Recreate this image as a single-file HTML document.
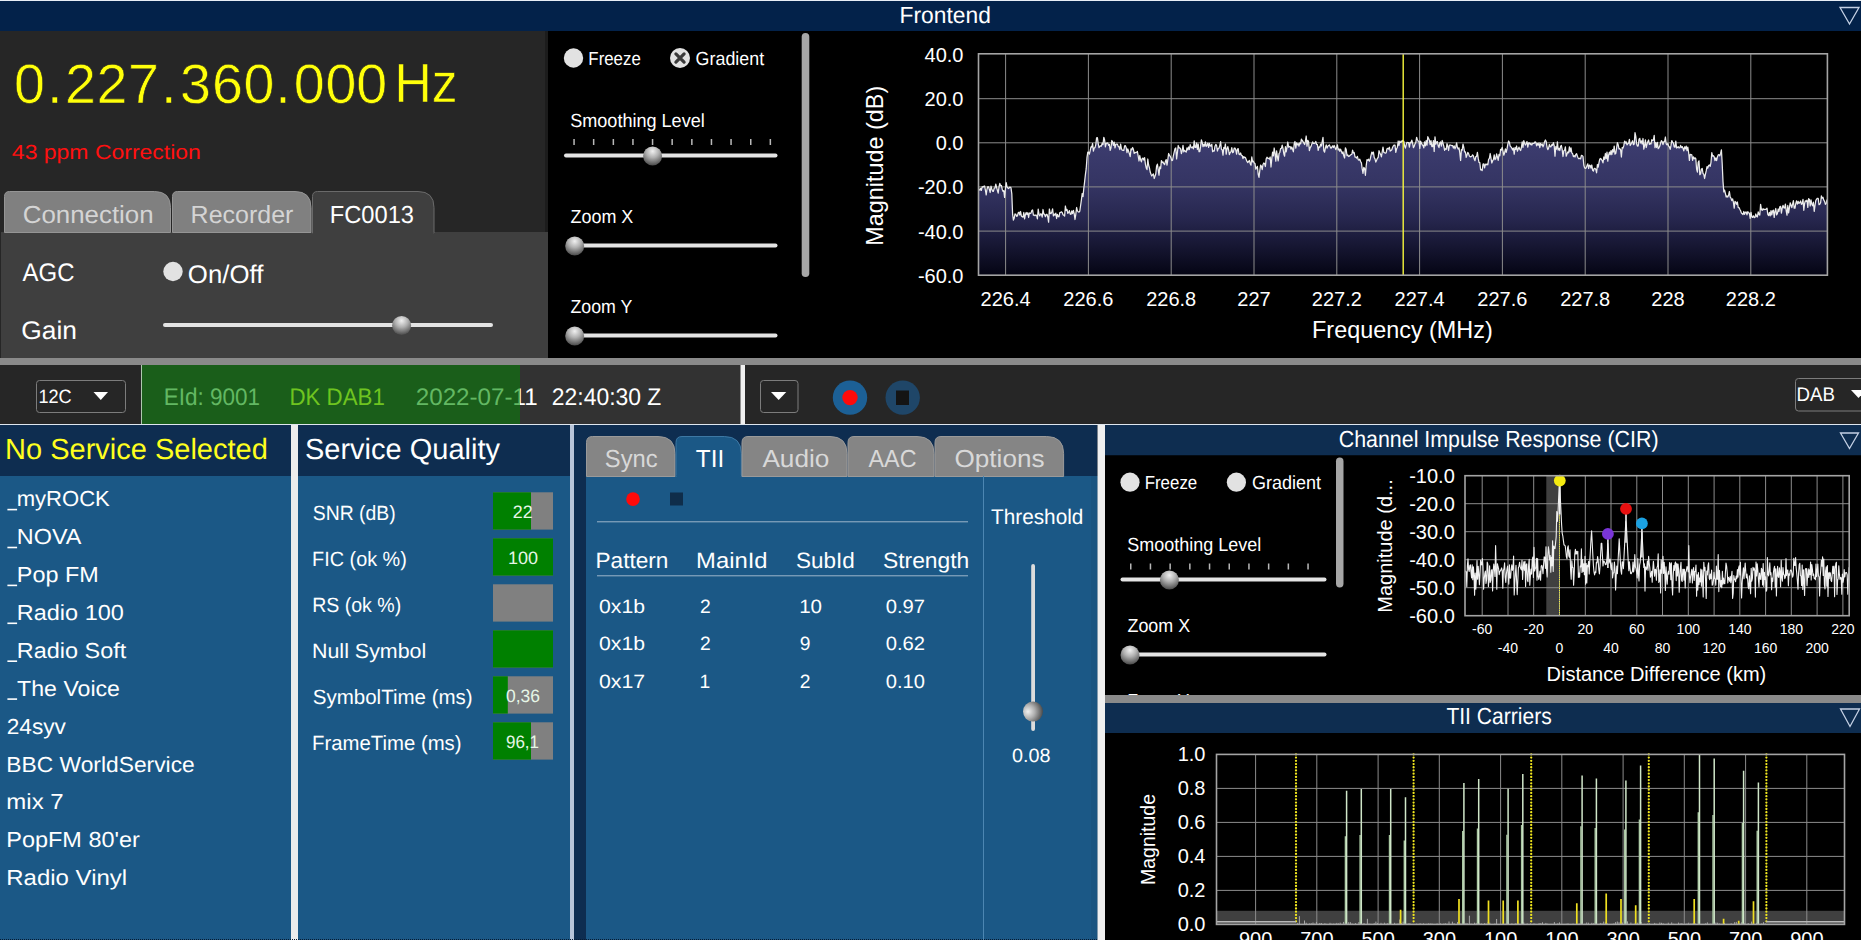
<!DOCTYPE html>
<html><head><meta charset="utf-8"><title>DAB Receiver</title>
<style>
html,body{margin:0;padding:0;background:#000;overflow:hidden;}
body{width:1861px;height:940px;font-family:"Liberation Sans", sans-serif;}
svg{display:block;position:absolute;left:0;top:0;}
svg text{font-family:"Liberation Sans", sans-serif;white-space:pre;}
svg text.u{text-rendering:geometricPrecision;}
</style></head><body>
<svg width="1861" height="940" viewBox="0 0 1861 940">
<defs>
<radialGradient id="thumb" cx="50%" cy="25%" r="75%"><stop offset="0" stop-color="#f0f0f0"/><stop offset="0.45" stop-color="#b0b0b0"/><stop offset="1" stop-color="#4a4a4a"/></radialGradient>
<radialGradient id="thumbv" cx="25%" cy="50%" r="75%"><stop offset="0" stop-color="#f0f0f0"/><stop offset="0.45" stop-color="#b0b0b0"/><stop offset="1" stop-color="#4a4a4a"/></radialGradient>
<linearGradient id="specfill" x1="0" y1="0" x2="0" y2="1"><stop offset="0" stop-color="#3e3e72"/><stop offset="0.38" stop-color="#343462"/><stop offset="0.6" stop-color="#27274f"/><stop offset="0.8" stop-color="#161632"/><stop offset="1" stop-color="#050514"/></linearGradient>
<clipPath id="clipG"><rect x="141" y="365" width="379" height="59"/></clipPath>
<clipPath id="clipN"><rect x="520" y="365" width="221" height="59"/></clipPath>
<clipPath id="clipSpec"><rect x="979" y="54" width="848" height="221"/></clipPath>
<clipPath id="clipCir"><rect x="1465" y="476" width="384" height="140"/></clipPath>
<clipPath id="clipTii"><rect x="1217" y="755" width="627" height="170"/></clipPath>
<clipPath id="clipCirCtl"><rect x="1105" y="456" width="245" height="239"/></clipPath>
</defs>
<rect x="0" y="0" width="1861" height="940" fill="#000"/>
<rect x="0" y="0" width="1861" height="1" fill="#e8eef6"/>
<rect x="0" y="1" width="1861" height="30" fill="#03224a"/>
<text class="u" x="899.58" y="22.9" font-size="23.3" fill="#fff" text-anchor="start" textLength="91.25" lengthAdjust="spacingAndGlyphs">Frontend</text>
<path d="M1840,7.5 L1859,7.5 L1849.5,24 Z" fill="none" stroke="#c4d0e4" stroke-width="1.3"/>
<rect x="0" y="31" width="548" height="327" fill="#262626"/>
<rect x="545" y="31" width="3" height="201" fill="#1c1c1c"/>
<text class="u" x="14.0 47.0 65.0 96.5 128.0 161.0 180.0 212.0 243.6 275.2 293.7 325.4 356.2" y="102.7" font-size="55.6" fill="#ffff0a" stroke="#262626" stroke-width="0.6" paint-order="fill stroke">0.227.360.000</text>
<text class="u" x="394.46" y="101.6" font-size="55.3" fill="#ffff0a" text-anchor="start" textLength="63.17" lengthAdjust="spacingAndGlyphs" stroke="#262626" stroke-width="0.6" paint-order="fill stroke">Hz</text>
<text class="u" x="11.88" y="158.9" font-size="20.4" fill="#ff1010" text-anchor="start" textLength="188.98" lengthAdjust="spacingAndGlyphs">43 ppm Correction</text>
<rect x="1" y="232" width="547" height="126" fill="#3f3f3f"/>
<path d="M4.5,232.5 L4.5,196.5 Q4.5,191.5 9.5,191.5 L154.5,191.5 Q170.5,191.5 170.5,207.5 L170.5,232.5 Z" fill="#808080" stroke="#959595" stroke-width="1"/>
<path d="M172.5,232.5 L172.5,196.5 Q172.5,191.5 177.5,191.5 L295,191.5 Q311,191.5 311,207.5 L311,232.5 Z" fill="#808080" stroke="#959595" stroke-width="1"/>
<path d="M312.5,233 L312.5,196.5 Q312.5,191.5 317.5,191.5 L418,191.5 Q434,191.5 434,207.5 L434,233 Z" fill="#3f3f3f" stroke="#6a6a6a" stroke-width="1"/>
<rect x="313" y="232" width="120.5" height="2" fill="#3f3f3f"/>
<text class="u" x="22.71" y="222.5" font-size="24.7" fill="#d4d4d4" text-anchor="start" textLength="130.96" lengthAdjust="spacingAndGlyphs">Connection</text>
<text class="u" x="190.60" y="222.5" font-size="24.7" fill="#d4d4d4" text-anchor="start" textLength="102.78" lengthAdjust="spacingAndGlyphs">Recorder</text>
<text class="u" x="329.81" y="222.5" font-size="24.7" fill="#fff" text-anchor="start" textLength="84.20" lengthAdjust="spacingAndGlyphs">FC0013</text>
<text class="u" x="22.60" y="280.5" font-size="25.5" fill="#fff" text-anchor="start" textLength="51.89" lengthAdjust="spacingAndGlyphs">AGC</text>
<circle cx="173" cy="271.5" r="9.7" fill="#e2e2e2"/>
<text class="u" x="187.84" y="283.4" font-size="25.5" fill="#fff" text-anchor="start" textLength="75.49" lengthAdjust="spacingAndGlyphs">On/Off</text>
<text class="u" x="21.28" y="339.0" font-size="25.5" fill="#fff" text-anchor="start" textLength="55.73" lengthAdjust="spacingAndGlyphs">Gain</text>
<rect x="163" y="323" width="330" height="4" rx="2" fill="#e4e4e4"/>
<circle cx="401.6" cy="325.5" r="9.5" fill="url(#thumb)"/>
<circle cx="573.5" cy="58" r="9.7" fill="#e2e2e2"/>
<text class="u" x="588.35" y="64.7" font-size="19" fill="#fff" text-anchor="start" textLength="52.40" lengthAdjust="spacingAndGlyphs">Freeze</text>
<circle cx="680" cy="58" r="10" fill="#e2e2e2"/>
<path d="M675.9,53.9 L684.1,62.1 M684.1,53.9 L675.9,62.1" stroke="#3a3a3a" stroke-width="3.2" stroke-linecap="round"/>
<text class="u" x="695.61" y="64.7" font-size="19" fill="#fff" text-anchor="start" textLength="68.49" lengthAdjust="spacingAndGlyphs">Gradient</text>
<text class="u" x="570.19" y="127.0" font-size="19" fill="#fff" text-anchor="start" textLength="134.58" lengthAdjust="spacingAndGlyphs">Smoothing Level</text>
<rect x="573.3" y="139" width="1.5" height="6" fill="#b8b8b8"/>
<rect x="592.9" y="139" width="1.5" height="6" fill="#b8b8b8"/>
<rect x="612.6" y="139" width="1.5" height="6" fill="#b8b8b8"/>
<rect x="632.2" y="139" width="1.5" height="6" fill="#b8b8b8"/>
<rect x="651.8" y="139" width="1.5" height="6" fill="#b8b8b8"/>
<rect x="671.4" y="139" width="1.5" height="6" fill="#b8b8b8"/>
<rect x="691.1" y="139" width="1.5" height="6" fill="#b8b8b8"/>
<rect x="710.7" y="139" width="1.5" height="6" fill="#b8b8b8"/>
<rect x="730.3" y="139" width="1.5" height="6" fill="#b8b8b8"/>
<rect x="750.0" y="139" width="1.5" height="6" fill="#b8b8b8"/>
<rect x="769.6" y="139" width="1.5" height="6" fill="#b8b8b8"/>
<rect x="564" y="153.5" width="213.5" height="4" rx="2" fill="#e4e4e4"/>
<circle cx="652.6" cy="156.0" r="9.5" fill="url(#thumb)"/>
<text class="u" x="570.46" y="223.0" font-size="19" fill="#fff" text-anchor="start" textLength="62.87" lengthAdjust="spacingAndGlyphs">Zoom X</text>
<rect x="566" y="243.5" width="211.5" height="4" rx="2" fill="#e4e4e4"/>
<circle cx="574.7" cy="246.0" r="9.5" fill="url(#thumb)"/>
<text class="u" x="570.47" y="312.6" font-size="19" fill="#fff" text-anchor="start" textLength="61.94" lengthAdjust="spacingAndGlyphs">Zoom Y</text>
<rect x="566" y="333.5" width="211.5" height="4" rx="2" fill="#e4e4e4"/>
<circle cx="574.7" cy="336.0" r="9.5" fill="url(#thumb)"/>
<rect x="801.7" y="33" width="7.6" height="244" rx="3.8" fill="#a6a6a6"/>
<rect x="979" y="54" width="848.4000000000001" height="221" fill="#000"/>
<g clip-path="url(#clipSpec)"><polygon points="979,275 979.0,188.8 979.8,190.2 980.6,188.4 981.4,190.4 982.2,186.7 983.0,187.1 983.8,186.3 984.6,186.0 985.4,190.2 986.2,195.0 987.0,189.0 987.8,186.7 988.6,186.9 989.4,189.5 990.2,192.5 991.0,186.2 991.8,188.9 992.6,191.2 993.4,191.4 994.2,188.2 995.0,188.0 995.8,184.1 996.6,187.3 997.4,190.3 998.2,193.1 999.0,187.0 999.8,183.4 1000.6,185.7 1001.4,185.5 1002.2,189.2 1003.0,191.3 1003.8,190.6 1004.6,197.4 1005.4,188.8 1006.2,182.6 1007.0,186.8 1007.8,188.0 1008.6,188.6 1009.4,187.4 1010.2,187.2 1011.0,187.8 1011.8,193.8 1012.6,214.2 1013.4,220.1 1014.2,218.2 1015.0,214.0 1015.8,214.1 1016.6,216.3 1017.4,216.0 1018.2,212.8 1019.0,212.2 1019.8,215.0 1020.6,211.5 1021.4,216.2 1022.2,216.6 1023.0,217.1 1023.8,212.5 1024.6,218.8 1025.4,214.7 1026.2,212.5 1027.0,214.5 1027.8,212.7 1028.6,217.5 1029.4,213.0 1030.2,213.5 1031.0,213.1 1031.8,210.6 1032.6,210.0 1033.4,215.1 1034.2,215.1 1035.0,215.7 1035.8,215.0 1036.6,215.3 1037.4,218.9 1038.2,209.2 1039.0,214.2 1039.8,215.9 1040.6,213.8 1041.4,214.0 1042.2,217.2 1043.0,209.5 1043.8,213.8 1044.6,214.5 1045.4,216.7 1046.2,214.4 1047.0,214.3 1047.8,217.0 1048.6,222.1 1049.4,209.0 1050.2,213.3 1051.0,213.6 1051.8,212.0 1052.6,208.8 1053.4,215.9 1054.2,214.1 1055.0,215.1 1055.8,213.2 1056.6,218.5 1057.4,214.4 1058.2,216.5 1059.0,216.8 1059.8,212.6 1060.6,212.5 1061.4,211.8 1062.2,212.4 1063.0,214.7 1063.8,215.2 1064.6,216.1 1065.4,206.0 1066.2,210.4 1067.0,209.4 1067.8,213.3 1068.6,212.5 1069.4,210.6 1070.2,214.2 1071.0,214.4 1071.8,210.8 1072.6,213.7 1073.4,210.3 1074.2,213.7 1075.0,219.5 1075.8,214.3 1076.6,207.5 1077.4,210.9 1078.2,211.7 1079.0,212.2 1079.8,211.2 1080.6,205.5 1081.4,199.8 1082.2,193.5 1083.0,196.6 1083.8,188.5 1084.6,181.9 1085.4,174.6 1086.2,168.7 1087.0,157.3 1087.8,152.1 1088.6,152.2 1089.4,154.2 1090.2,150.7 1091.0,146.8 1091.8,147.1 1092.6,143.5 1093.4,151.2 1094.2,148.0 1095.0,147.6 1095.8,144.6 1096.6,137.9 1097.4,137.6 1098.2,143.6 1099.0,147.7 1099.8,146.4 1100.6,145.9 1101.4,146.2 1102.2,143.1 1103.0,144.6 1103.8,137.3 1104.6,140.0 1105.4,146.9 1106.2,143.4 1107.0,143.1 1107.8,142.9 1108.6,145.4 1109.4,144.3 1110.2,150.4 1111.0,147.7 1111.8,140.5 1112.6,141.9 1113.4,145.3 1114.2,142.2 1115.0,147.9 1115.8,144.3 1116.6,144.1 1117.4,144.1 1118.2,146.4 1119.0,146.9 1119.8,149.7 1120.6,144.2 1121.4,148.6 1122.2,150.2 1123.0,150.3 1123.8,150.5 1124.6,145.8 1125.4,145.6 1126.2,147.7 1127.0,152.6 1127.8,148.9 1128.6,151.2 1129.4,153.8 1130.2,156.7 1131.0,148.9 1131.8,149.8 1132.6,147.5 1133.4,149.3 1134.2,153.4 1135.0,152.3 1135.8,152.7 1136.6,152.3 1137.4,151.5 1138.2,156.1 1139.0,161.0 1139.8,155.5 1140.6,159.8 1141.4,161.8 1142.2,158.5 1143.0,158.1 1143.8,160.1 1144.6,157.6 1145.4,164.1 1146.2,167.9 1147.0,169.6 1147.8,159.0 1148.6,165.0 1149.4,167.7 1150.2,172.0 1151.0,174.2 1151.8,176.0 1152.6,174.8 1153.4,174.0 1154.2,178.5 1155.0,176.3 1155.8,173.8 1156.6,166.1 1157.4,164.2 1158.2,169.6 1159.0,175.1 1159.8,166.8 1160.6,168.7 1161.4,160.6 1162.2,162.6 1163.0,161.9 1163.8,163.7 1164.6,164.6 1165.4,161.3 1166.2,159.6 1167.0,165.1 1167.8,159.9 1168.6,153.5 1169.4,155.2 1170.2,156.3 1171.0,157.9 1171.8,160.6 1172.6,160.1 1173.4,155.6 1174.2,152.2 1175.0,148.7 1175.8,148.0 1176.6,158.9 1177.4,152.7 1178.2,145.5 1179.0,147.9 1179.8,147.8 1180.6,148.9 1181.4,153.7 1182.2,150.8 1183.0,145.3 1183.8,151.8 1184.6,150.3 1185.4,151.3 1186.2,152.1 1187.0,147.9 1187.8,149.9 1188.6,147.0 1189.4,149.5 1190.2,144.6 1191.0,147.1 1191.8,147.8 1192.6,146.8 1193.4,148.9 1194.2,140.9 1195.0,147.4 1195.8,147.4 1196.6,143.0 1197.4,149.5 1198.2,144.0 1199.0,151.7 1199.8,151.6 1200.6,146.4 1201.4,139.9 1202.2,142.5 1203.0,146.7 1203.8,144.4 1204.6,146.1 1205.4,141.9 1206.2,146.5 1207.0,145.3 1207.8,143.1 1208.6,147.4 1209.4,143.4 1210.2,145.7 1211.0,146.1 1211.8,144.3 1212.6,151.7 1213.4,150.8 1214.2,151.1 1215.0,146.2 1215.8,144.5 1216.6,145.5 1217.4,151.0 1218.2,148.5 1219.0,148.1 1219.8,145.6 1220.6,141.6 1221.4,149.2 1222.2,149.8 1223.0,155.1 1223.8,147.5 1224.6,148.5 1225.4,144.0 1226.2,154.2 1227.0,148.8 1227.8,146.6 1228.6,149.9 1229.4,154.6 1230.2,152.6 1231.0,151.7 1231.8,147.6 1232.6,152.6 1233.4,152.2 1234.2,148.0 1235.0,148.0 1235.8,150.1 1236.6,154.2 1237.4,149.2 1238.2,148.6 1239.0,154.1 1239.8,154.6 1240.6,153.0 1241.4,155.4 1242.2,155.5 1243.0,158.6 1243.8,156.6 1244.6,157.5 1245.4,157.4 1246.2,159.4 1247.0,161.4 1247.8,162.6 1248.6,161.4 1249.4,160.5 1250.2,163.7 1251.0,165.2 1251.8,156.9 1252.6,161.8 1253.4,161.2 1254.2,163.0 1255.0,163.6 1255.8,169.2 1256.6,167.8 1257.4,166.4 1258.2,174.3 1259.0,177.4 1259.8,170.6 1260.6,165.2 1261.4,166.2 1262.2,169.7 1263.0,164.5 1263.8,163.0 1264.6,163.8 1265.4,166.5 1266.2,158.8 1267.0,157.2 1267.8,158.4 1268.6,158.3 1269.4,159.0 1270.2,157.0 1271.0,167.0 1271.8,158.6 1272.6,152.1 1273.4,155.9 1274.2,148.0 1275.0,153.4 1275.8,161.1 1276.6,150.9 1277.4,156.9 1278.2,160.9 1279.0,153.6 1279.8,152.5 1280.6,148.6 1281.4,148.3 1282.2,145.1 1283.0,148.4 1283.8,153.7 1284.6,156.2 1285.4,146.7 1286.2,151.9 1287.0,147.5 1287.8,142.0 1288.6,147.2 1289.4,146.5 1290.2,146.6 1291.0,149.2 1291.8,147.0 1292.6,149.2 1293.4,151.8 1294.2,143.7 1295.0,141.5 1295.8,148.2 1296.6,142.9 1297.4,144.8 1298.2,143.6 1299.0,146.2 1299.8,142.8 1300.6,143.8 1301.4,139.1 1302.2,140.5 1303.0,141.5 1303.8,143.0 1304.6,144.5 1305.4,141.4 1306.2,136.0 1307.0,146.2 1307.8,140.4 1308.6,141.9 1309.4,150.7 1310.2,147.5 1311.0,146.5 1311.8,144.1 1312.6,141.9 1313.4,143.4 1314.2,143.5 1315.0,143.0 1315.8,141.5 1316.6,144.5 1317.4,144.7 1318.2,150.4 1319.0,146.9 1319.8,147.3 1320.6,144.1 1321.4,146.0 1322.2,141.6 1323.0,137.3 1323.8,150.6 1324.6,152.1 1325.4,147.8 1326.2,144.8 1327.0,148.2 1327.8,146.2 1328.6,145.6 1329.4,144.9 1330.2,146.7 1331.0,148.3 1331.8,147.2 1332.6,145.8 1333.4,147.5 1334.2,145.5 1335.0,147.5 1335.8,149.6 1336.6,147.7 1337.4,144.8 1338.2,150.0 1339.0,148.8 1339.8,151.3 1340.6,149.2 1341.4,151.4 1342.2,153.6 1343.0,151.8 1343.8,155.8 1344.6,158.0 1345.4,147.9 1346.2,149.5 1347.0,155.7 1347.8,155.0 1348.6,156.5 1349.4,156.1 1350.2,155.3 1351.0,154.6 1351.8,154.5 1352.6,150.2 1353.4,153.0 1354.2,152.5 1355.0,157.0 1355.8,157.0 1356.6,158.1 1357.4,156.4 1358.2,159.7 1359.0,160.1 1359.8,159.2 1360.6,161.5 1361.4,162.9 1362.2,168.8 1363.0,173.3 1363.8,167.4 1364.6,168.3 1365.4,175.3 1366.2,165.7 1367.0,159.7 1367.8,160.3 1368.6,159.2 1369.4,161.2 1370.2,159.2 1371.0,155.4 1371.8,152.1 1372.6,154.0 1373.4,152.1 1374.2,157.5 1375.0,158.9 1375.8,162.1 1376.6,160.2 1377.4,158.3 1378.2,157.5 1379.0,150.7 1379.8,152.7 1380.6,154.4 1381.4,156.8 1382.2,151.9 1383.0,147.1 1383.8,152.4 1384.6,152.8 1385.4,153.2 1386.2,152.7 1387.0,148.7 1387.8,148.3 1388.6,149.0 1389.4,147.2 1390.2,151.1 1391.0,150.5 1391.8,149.7 1392.6,147.3 1393.4,145.9 1394.2,145.0 1395.0,145.0 1395.8,152.4 1396.6,148.8 1397.4,147.2 1398.2,141.0 1399.0,145.5 1399.8,141.1 1400.6,142.3 1401.4,142.1 1402.2,140.4 1403.0,141.4 1403.8,141.2 1404.6,146.1 1405.4,148.1 1406.2,144.6 1407.0,142.3 1407.8,142.5 1408.6,142.7 1409.4,147.2 1410.2,142.4 1411.0,142.9 1411.8,140.1 1412.6,143.2 1413.4,147.6 1414.2,146.3 1415.0,143.9 1415.8,142.5 1416.6,137.3 1417.4,139.8 1418.2,141.2 1419.0,141.4 1419.8,148.5 1420.6,141.2 1421.4,142.9 1422.2,144.7 1423.0,145.5 1423.8,147.9 1424.6,141.9 1425.4,145.8 1426.2,140.5 1427.0,145.1 1427.8,136.7 1428.6,138.5 1429.4,140.2 1430.2,144.7 1431.0,140.6 1431.8,146.5 1432.6,146.5 1433.4,140.7 1434.2,151.5 1435.0,136.9 1435.8,144.2 1436.6,142.1 1437.4,141.6 1438.2,145.9 1439.0,147.6 1439.8,142.9 1440.6,142.0 1441.4,146.2 1442.2,140.5 1443.0,143.1 1443.8,146.2 1444.6,150.3 1445.4,148.7 1446.2,149.4 1447.0,143.7 1447.8,146.4 1448.6,150.5 1449.4,145.2 1450.2,145.1 1451.0,145.2 1451.8,145.7 1452.6,145.5 1453.4,148.0 1454.2,145.9 1455.0,148.8 1455.8,146.7 1456.6,142.8 1457.4,147.4 1458.2,149.0 1459.0,147.8 1459.8,152.9 1460.6,160.5 1461.4,149.6 1462.2,150.1 1463.0,144.1 1463.8,147.5 1464.6,151.9 1465.4,151.9 1466.2,157.4 1467.0,155.0 1467.8,152.4 1468.6,153.6 1469.4,156.1 1470.2,156.8 1471.0,156.7 1471.8,156.3 1472.6,154.8 1473.4,155.8 1474.2,159.0 1475.0,160.7 1475.8,156.7 1476.6,156.4 1477.4,152.4 1478.2,158.2 1479.0,162.3 1479.8,162.6 1480.6,169.8 1481.4,169.5 1482.2,170.5 1483.0,164.1 1483.8,163.8 1484.6,167.9 1485.4,164.1 1486.2,164.9 1487.0,163.9 1487.8,164.8 1488.6,159.3 1489.4,158.3 1490.2,153.5 1491.0,158.3 1491.8,163.0 1492.6,160.8 1493.4,159.5 1494.2,154.8 1495.0,159.6 1495.8,158.8 1496.6,153.8 1497.4,156.8 1498.2,160.4 1499.0,154.3 1499.8,155.8 1500.6,149.3 1501.4,150.0 1502.2,147.4 1503.0,151.1 1503.8,155.2 1504.6,152.7 1505.4,148.8 1506.2,152.4 1507.0,148.9 1507.8,144.3 1508.6,141.0 1509.4,142.4 1510.2,146.1 1511.0,146.9 1511.8,148.1 1512.6,150.0 1513.4,148.1 1514.2,154.2 1515.0,147.6 1515.8,149.4 1516.6,146.0 1517.4,151.2 1518.2,149.1 1519.0,147.2 1519.8,149.3 1520.6,150.5 1521.4,147.5 1522.2,141.8 1523.0,147.4 1523.8,140.6 1524.6,143.3 1525.4,145.0 1526.2,143.5 1527.0,141.6 1527.8,147.1 1528.6,142.8 1529.4,142.8 1530.2,144.6 1531.0,143.4 1531.8,145.1 1532.6,143.4 1533.4,143.3 1534.2,143.3 1535.0,141.9 1535.8,142.4 1536.6,145.8 1537.4,143.5 1538.2,145.1 1539.0,142.9 1539.8,147.6 1540.6,143.4 1541.4,145.1 1542.2,144.0 1543.0,146.9 1543.8,144.7 1544.6,141.7 1545.4,140.0 1546.2,141.5 1547.0,147.0 1547.8,149.6 1548.6,148.1 1549.4,144.5 1550.2,146.6 1551.0,146.8 1551.8,144.6 1552.6,145.3 1553.4,142.6 1554.2,145.6 1555.0,156.1 1555.8,146.7 1556.6,149.2 1557.4,141.8 1558.2,150.1 1559.0,148.3 1559.8,150.5 1560.6,146.2 1561.4,145.5 1562.2,149.6 1563.0,156.5 1563.8,150.8 1564.6,150.3 1565.4,146.9 1566.2,156.2 1567.0,154.1 1567.8,151.9 1568.6,152.8 1569.4,146.9 1570.2,151.7 1571.0,147.9 1571.8,152.9 1572.6,153.7 1573.4,156.7 1574.2,155.7 1575.0,157.0 1575.8,154.5 1576.6,153.7 1577.4,156.3 1578.2,158.1 1579.0,158.8 1579.8,158.2 1580.6,158.9 1581.4,155.3 1582.2,155.6 1583.0,156.4 1583.8,165.0 1584.6,167.8 1585.4,168.4 1586.2,167.9 1587.0,165.6 1587.8,163.8 1588.6,168.5 1589.4,165.2 1590.2,165.5 1591.0,168.1 1591.8,165.0 1592.6,170.2 1593.4,171.0 1594.2,168.4 1595.0,168.4 1595.8,169.3 1596.6,172.8 1597.4,164.5 1598.2,167.2 1599.0,162.6 1599.8,159.0 1600.6,158.5 1601.4,159.5 1602.2,160.7 1603.0,162.8 1603.8,157.0 1604.6,159.4 1605.4,153.5 1606.2,158.7 1607.0,152.2 1607.8,161.2 1608.6,155.1 1609.4,152.2 1610.2,154.7 1611.0,150.6 1611.8,154.7 1612.6,149.6 1613.4,152.0 1614.2,146.1 1615.0,154.1 1615.8,153.3 1616.6,148.0 1617.4,142.6 1618.2,144.8 1619.0,148.9 1619.8,148.6 1620.6,149.9 1621.4,157.0 1622.2,147.5 1623.0,148.1 1623.8,145.7 1624.6,141.1 1625.4,143.1 1626.2,141.8 1627.0,144.8 1627.8,143.8 1628.6,143.3 1629.4,139.4 1630.2,145.5 1631.0,144.2 1631.8,142.5 1632.6,140.7 1633.4,144.7 1634.2,144.1 1635.0,132.7 1635.8,136.4 1636.6,143.8 1637.4,146.1 1638.2,146.0 1639.0,139.2 1639.8,138.3 1640.6,142.9 1641.4,140.9 1642.2,144.0 1643.0,138.5 1643.8,149.2 1644.6,145.6 1645.4,139.9 1646.2,147.5 1647.0,144.4 1647.8,141.8 1648.6,140.0 1649.4,144.4 1650.2,143.4 1651.0,144.0 1651.8,139.6 1652.6,140.5 1653.4,140.2 1654.2,135.3 1655.0,147.7 1655.8,142.7 1656.6,147.5 1657.4,142.3 1658.2,148.7 1659.0,147.8 1659.8,146.1 1660.6,143.0 1661.4,140.7 1662.2,141.6 1663.0,144.7 1663.8,141.6 1664.6,141.6 1665.4,137.0 1666.2,143.8 1667.0,144.8 1667.8,143.5 1668.6,146.0 1669.4,147.0 1670.2,149.3 1671.0,145.4 1671.8,140.6 1672.6,142.3 1673.4,143.1 1674.2,146.9 1675.0,147.2 1675.8,141.1 1676.6,148.0 1677.4,147.5 1678.2,146.7 1679.0,148.0 1679.8,147.7 1680.6,145.4 1681.4,147.6 1682.2,146.6 1683.0,148.2 1683.8,150.9 1684.6,146.8 1685.4,148.9 1686.2,146.2 1687.0,150.7 1687.8,147.2 1688.6,152.3 1689.4,160.4 1690.2,154.4 1691.0,154.6 1691.8,154.9 1692.6,160.4 1693.4,156.8 1694.2,158.9 1695.0,157.8 1695.8,158.6 1696.6,169.0 1697.4,172.1 1698.2,162.2 1699.0,160.8 1699.8,174.7 1700.6,173.9 1701.4,169.2 1702.2,168.4 1703.0,173.5 1703.8,174.3 1704.6,178.5 1705.4,174.4 1706.2,170.9 1707.0,166.6 1707.8,168.1 1708.6,165.5 1709.4,164.9 1710.2,166.4 1711.0,162.3 1711.8,152.7 1712.6,156.2 1713.4,155.7 1714.2,156.9 1715.0,160.5 1715.8,157.9 1716.6,160.6 1717.4,156.9 1718.2,154.9 1719.0,154.7 1719.8,155.9 1720.6,153.4 1721.4,149.8 1722.2,163.8 1723.0,181.6 1723.8,191.9 1724.6,190.1 1725.4,193.5 1726.2,197.0 1727.0,196.0 1727.8,197.1 1728.6,195.0 1729.4,191.5 1730.2,197.2 1731.0,198.2 1731.8,200.6 1732.6,198.9 1733.4,202.1 1734.2,208.2 1735.0,201.4 1735.8,202.2 1736.6,204.4 1737.4,202.0 1738.2,207.5 1739.0,207.5 1739.8,209.2 1740.6,210.8 1741.4,213.1 1742.2,213.8 1743.0,214.6 1743.8,211.5 1744.6,214.4 1745.4,212.1 1746.2,212.0 1747.0,214.8 1747.8,211.7 1748.6,213.0 1749.4,213.2 1750.2,218.3 1751.0,212.4 1751.8,216.8 1752.6,217.4 1753.4,215.8 1754.2,217.6 1755.0,217.3 1755.8,214.0 1756.6,216.4 1757.4,216.9 1758.2,211.9 1759.0,214.2 1759.8,215.0 1760.6,204.4 1761.4,209.4 1762.2,210.4 1763.0,208.7 1763.8,209.7 1764.6,209.4 1765.4,209.4 1766.2,209.1 1767.0,208.2 1767.8,214.5 1768.6,215.6 1769.4,212.3 1770.2,215.8 1771.0,210.7 1771.8,214.8 1772.6,211.0 1773.4,210.2 1774.2,217.4 1775.0,211.4 1775.8,208.5 1776.6,214.8 1777.4,213.6 1778.2,209.0 1779.0,211.5 1779.8,206.7 1780.6,206.3 1781.4,213.1 1782.2,208.2 1783.0,205.3 1783.8,207.9 1784.6,208.0 1785.4,204.1 1786.2,210.8 1787.0,215.1 1787.8,205.5 1788.6,212.9 1789.4,207.9 1790.2,202.8 1791.0,205.0 1791.8,207.6 1792.6,204.2 1793.4,200.7 1794.2,208.1 1795.0,208.2 1795.8,203.4 1796.6,200.8 1797.4,204.2 1798.2,201.4 1799.0,203.4 1799.8,202.5 1800.6,201.0 1801.4,204.3 1802.2,203.7 1803.0,199.4 1803.8,210.3 1804.6,203.5 1805.4,200.8 1806.2,201.3 1807.0,200.2 1807.8,207.4 1808.6,198.7 1809.4,199.5 1810.2,206.0 1811.0,199.8 1811.8,204.2 1812.6,205.8 1813.4,202.2 1814.2,211.3 1815.0,205.6 1815.8,200.5 1816.6,199.1 1817.4,198.3 1818.2,198.3 1819.0,204.6 1819.8,204.2 1820.6,202.8 1821.4,195.9 1822.2,198.2 1823.0,197.3 1823.8,200.2 1824.6,201.3 1825.4,204.3 1826.2,203.6 1827.0,199.5 1827.4,275" fill="url(#specfill)"/></g>
<path d="M1005.6,54 V275 M1088.4,54 V275 M1171.2,54 V275 M1254.0,54 V275 M1336.8,54 V275 M1419.6,54 V275 M1502.4,54 V275 M1585.2,54 V275 M1668.0,54 V275 M1750.8,54 V275 M979,98.7 H1827.4 M979,142.8 H1827.4 M979,186.9 H1827.4 M979,231.1 H1827.4" stroke="#8c8c8c" stroke-width="1" fill="none"/>
<g clip-path="url(#clipSpec)"><polyline points="979.0,188.8 979.8,190.2 980.6,188.4 981.4,190.4 982.2,186.7 983.0,187.1 983.8,186.3 984.6,186.0 985.4,190.2 986.2,195.0 987.0,189.0 987.8,186.7 988.6,186.9 989.4,189.5 990.2,192.5 991.0,186.2 991.8,188.9 992.6,191.2 993.4,191.4 994.2,188.2 995.0,188.0 995.8,184.1 996.6,187.3 997.4,190.3 998.2,193.1 999.0,187.0 999.8,183.4 1000.6,185.7 1001.4,185.5 1002.2,189.2 1003.0,191.3 1003.8,190.6 1004.6,197.4 1005.4,188.8 1006.2,182.6 1007.0,186.8 1007.8,188.0 1008.6,188.6 1009.4,187.4 1010.2,187.2 1011.0,187.8 1011.8,193.8 1012.6,214.2 1013.4,220.1 1014.2,218.2 1015.0,214.0 1015.8,214.1 1016.6,216.3 1017.4,216.0 1018.2,212.8 1019.0,212.2 1019.8,215.0 1020.6,211.5 1021.4,216.2 1022.2,216.6 1023.0,217.1 1023.8,212.5 1024.6,218.8 1025.4,214.7 1026.2,212.5 1027.0,214.5 1027.8,212.7 1028.6,217.5 1029.4,213.0 1030.2,213.5 1031.0,213.1 1031.8,210.6 1032.6,210.0 1033.4,215.1 1034.2,215.1 1035.0,215.7 1035.8,215.0 1036.6,215.3 1037.4,218.9 1038.2,209.2 1039.0,214.2 1039.8,215.9 1040.6,213.8 1041.4,214.0 1042.2,217.2 1043.0,209.5 1043.8,213.8 1044.6,214.5 1045.4,216.7 1046.2,214.4 1047.0,214.3 1047.8,217.0 1048.6,222.1 1049.4,209.0 1050.2,213.3 1051.0,213.6 1051.8,212.0 1052.6,208.8 1053.4,215.9 1054.2,214.1 1055.0,215.1 1055.8,213.2 1056.6,218.5 1057.4,214.4 1058.2,216.5 1059.0,216.8 1059.8,212.6 1060.6,212.5 1061.4,211.8 1062.2,212.4 1063.0,214.7 1063.8,215.2 1064.6,216.1 1065.4,206.0 1066.2,210.4 1067.0,209.4 1067.8,213.3 1068.6,212.5 1069.4,210.6 1070.2,214.2 1071.0,214.4 1071.8,210.8 1072.6,213.7 1073.4,210.3 1074.2,213.7 1075.0,219.5 1075.8,214.3 1076.6,207.5 1077.4,210.9 1078.2,211.7 1079.0,212.2 1079.8,211.2 1080.6,205.5 1081.4,199.8 1082.2,193.5 1083.0,196.6 1083.8,188.5 1084.6,181.9 1085.4,174.6 1086.2,168.7 1087.0,157.3 1087.8,152.1 1088.6,152.2 1089.4,154.2 1090.2,150.7 1091.0,146.8 1091.8,147.1 1092.6,143.5 1093.4,151.2 1094.2,148.0 1095.0,147.6 1095.8,144.6 1096.6,137.9 1097.4,137.6 1098.2,143.6 1099.0,147.7 1099.8,146.4 1100.6,145.9 1101.4,146.2 1102.2,143.1 1103.0,144.6 1103.8,137.3 1104.6,140.0 1105.4,146.9 1106.2,143.4 1107.0,143.1 1107.8,142.9 1108.6,145.4 1109.4,144.3 1110.2,150.4 1111.0,147.7 1111.8,140.5 1112.6,141.9 1113.4,145.3 1114.2,142.2 1115.0,147.9 1115.8,144.3 1116.6,144.1 1117.4,144.1 1118.2,146.4 1119.0,146.9 1119.8,149.7 1120.6,144.2 1121.4,148.6 1122.2,150.2 1123.0,150.3 1123.8,150.5 1124.6,145.8 1125.4,145.6 1126.2,147.7 1127.0,152.6 1127.8,148.9 1128.6,151.2 1129.4,153.8 1130.2,156.7 1131.0,148.9 1131.8,149.8 1132.6,147.5 1133.4,149.3 1134.2,153.4 1135.0,152.3 1135.8,152.7 1136.6,152.3 1137.4,151.5 1138.2,156.1 1139.0,161.0 1139.8,155.5 1140.6,159.8 1141.4,161.8 1142.2,158.5 1143.0,158.1 1143.8,160.1 1144.6,157.6 1145.4,164.1 1146.2,167.9 1147.0,169.6 1147.8,159.0 1148.6,165.0 1149.4,167.7 1150.2,172.0 1151.0,174.2 1151.8,176.0 1152.6,174.8 1153.4,174.0 1154.2,178.5 1155.0,176.3 1155.8,173.8 1156.6,166.1 1157.4,164.2 1158.2,169.6 1159.0,175.1 1159.8,166.8 1160.6,168.7 1161.4,160.6 1162.2,162.6 1163.0,161.9 1163.8,163.7 1164.6,164.6 1165.4,161.3 1166.2,159.6 1167.0,165.1 1167.8,159.9 1168.6,153.5 1169.4,155.2 1170.2,156.3 1171.0,157.9 1171.8,160.6 1172.6,160.1 1173.4,155.6 1174.2,152.2 1175.0,148.7 1175.8,148.0 1176.6,158.9 1177.4,152.7 1178.2,145.5 1179.0,147.9 1179.8,147.8 1180.6,148.9 1181.4,153.7 1182.2,150.8 1183.0,145.3 1183.8,151.8 1184.6,150.3 1185.4,151.3 1186.2,152.1 1187.0,147.9 1187.8,149.9 1188.6,147.0 1189.4,149.5 1190.2,144.6 1191.0,147.1 1191.8,147.8 1192.6,146.8 1193.4,148.9 1194.2,140.9 1195.0,147.4 1195.8,147.4 1196.6,143.0 1197.4,149.5 1198.2,144.0 1199.0,151.7 1199.8,151.6 1200.6,146.4 1201.4,139.9 1202.2,142.5 1203.0,146.7 1203.8,144.4 1204.6,146.1 1205.4,141.9 1206.2,146.5 1207.0,145.3 1207.8,143.1 1208.6,147.4 1209.4,143.4 1210.2,145.7 1211.0,146.1 1211.8,144.3 1212.6,151.7 1213.4,150.8 1214.2,151.1 1215.0,146.2 1215.8,144.5 1216.6,145.5 1217.4,151.0 1218.2,148.5 1219.0,148.1 1219.8,145.6 1220.6,141.6 1221.4,149.2 1222.2,149.8 1223.0,155.1 1223.8,147.5 1224.6,148.5 1225.4,144.0 1226.2,154.2 1227.0,148.8 1227.8,146.6 1228.6,149.9 1229.4,154.6 1230.2,152.6 1231.0,151.7 1231.8,147.6 1232.6,152.6 1233.4,152.2 1234.2,148.0 1235.0,148.0 1235.8,150.1 1236.6,154.2 1237.4,149.2 1238.2,148.6 1239.0,154.1 1239.8,154.6 1240.6,153.0 1241.4,155.4 1242.2,155.5 1243.0,158.6 1243.8,156.6 1244.6,157.5 1245.4,157.4 1246.2,159.4 1247.0,161.4 1247.8,162.6 1248.6,161.4 1249.4,160.5 1250.2,163.7 1251.0,165.2 1251.8,156.9 1252.6,161.8 1253.4,161.2 1254.2,163.0 1255.0,163.6 1255.8,169.2 1256.6,167.8 1257.4,166.4 1258.2,174.3 1259.0,177.4 1259.8,170.6 1260.6,165.2 1261.4,166.2 1262.2,169.7 1263.0,164.5 1263.8,163.0 1264.6,163.8 1265.4,166.5 1266.2,158.8 1267.0,157.2 1267.8,158.4 1268.6,158.3 1269.4,159.0 1270.2,157.0 1271.0,167.0 1271.8,158.6 1272.6,152.1 1273.4,155.9 1274.2,148.0 1275.0,153.4 1275.8,161.1 1276.6,150.9 1277.4,156.9 1278.2,160.9 1279.0,153.6 1279.8,152.5 1280.6,148.6 1281.4,148.3 1282.2,145.1 1283.0,148.4 1283.8,153.7 1284.6,156.2 1285.4,146.7 1286.2,151.9 1287.0,147.5 1287.8,142.0 1288.6,147.2 1289.4,146.5 1290.2,146.6 1291.0,149.2 1291.8,147.0 1292.6,149.2 1293.4,151.8 1294.2,143.7 1295.0,141.5 1295.8,148.2 1296.6,142.9 1297.4,144.8 1298.2,143.6 1299.0,146.2 1299.8,142.8 1300.6,143.8 1301.4,139.1 1302.2,140.5 1303.0,141.5 1303.8,143.0 1304.6,144.5 1305.4,141.4 1306.2,136.0 1307.0,146.2 1307.8,140.4 1308.6,141.9 1309.4,150.7 1310.2,147.5 1311.0,146.5 1311.8,144.1 1312.6,141.9 1313.4,143.4 1314.2,143.5 1315.0,143.0 1315.8,141.5 1316.6,144.5 1317.4,144.7 1318.2,150.4 1319.0,146.9 1319.8,147.3 1320.6,144.1 1321.4,146.0 1322.2,141.6 1323.0,137.3 1323.8,150.6 1324.6,152.1 1325.4,147.8 1326.2,144.8 1327.0,148.2 1327.8,146.2 1328.6,145.6 1329.4,144.9 1330.2,146.7 1331.0,148.3 1331.8,147.2 1332.6,145.8 1333.4,147.5 1334.2,145.5 1335.0,147.5 1335.8,149.6 1336.6,147.7 1337.4,144.8 1338.2,150.0 1339.0,148.8 1339.8,151.3 1340.6,149.2 1341.4,151.4 1342.2,153.6 1343.0,151.8 1343.8,155.8 1344.6,158.0 1345.4,147.9 1346.2,149.5 1347.0,155.7 1347.8,155.0 1348.6,156.5 1349.4,156.1 1350.2,155.3 1351.0,154.6 1351.8,154.5 1352.6,150.2 1353.4,153.0 1354.2,152.5 1355.0,157.0 1355.8,157.0 1356.6,158.1 1357.4,156.4 1358.2,159.7 1359.0,160.1 1359.8,159.2 1360.6,161.5 1361.4,162.9 1362.2,168.8 1363.0,173.3 1363.8,167.4 1364.6,168.3 1365.4,175.3 1366.2,165.7 1367.0,159.7 1367.8,160.3 1368.6,159.2 1369.4,161.2 1370.2,159.2 1371.0,155.4 1371.8,152.1 1372.6,154.0 1373.4,152.1 1374.2,157.5 1375.0,158.9 1375.8,162.1 1376.6,160.2 1377.4,158.3 1378.2,157.5 1379.0,150.7 1379.8,152.7 1380.6,154.4 1381.4,156.8 1382.2,151.9 1383.0,147.1 1383.8,152.4 1384.6,152.8 1385.4,153.2 1386.2,152.7 1387.0,148.7 1387.8,148.3 1388.6,149.0 1389.4,147.2 1390.2,151.1 1391.0,150.5 1391.8,149.7 1392.6,147.3 1393.4,145.9 1394.2,145.0 1395.0,145.0 1395.8,152.4 1396.6,148.8 1397.4,147.2 1398.2,141.0 1399.0,145.5 1399.8,141.1 1400.6,142.3 1401.4,142.1 1402.2,140.4 1403.0,141.4 1403.8,141.2 1404.6,146.1 1405.4,148.1 1406.2,144.6 1407.0,142.3 1407.8,142.5 1408.6,142.7 1409.4,147.2 1410.2,142.4 1411.0,142.9 1411.8,140.1 1412.6,143.2 1413.4,147.6 1414.2,146.3 1415.0,143.9 1415.8,142.5 1416.6,137.3 1417.4,139.8 1418.2,141.2 1419.0,141.4 1419.8,148.5 1420.6,141.2 1421.4,142.9 1422.2,144.7 1423.0,145.5 1423.8,147.9 1424.6,141.9 1425.4,145.8 1426.2,140.5 1427.0,145.1 1427.8,136.7 1428.6,138.5 1429.4,140.2 1430.2,144.7 1431.0,140.6 1431.8,146.5 1432.6,146.5 1433.4,140.7 1434.2,151.5 1435.0,136.9 1435.8,144.2 1436.6,142.1 1437.4,141.6 1438.2,145.9 1439.0,147.6 1439.8,142.9 1440.6,142.0 1441.4,146.2 1442.2,140.5 1443.0,143.1 1443.8,146.2 1444.6,150.3 1445.4,148.7 1446.2,149.4 1447.0,143.7 1447.8,146.4 1448.6,150.5 1449.4,145.2 1450.2,145.1 1451.0,145.2 1451.8,145.7 1452.6,145.5 1453.4,148.0 1454.2,145.9 1455.0,148.8 1455.8,146.7 1456.6,142.8 1457.4,147.4 1458.2,149.0 1459.0,147.8 1459.8,152.9 1460.6,160.5 1461.4,149.6 1462.2,150.1 1463.0,144.1 1463.8,147.5 1464.6,151.9 1465.4,151.9 1466.2,157.4 1467.0,155.0 1467.8,152.4 1468.6,153.6 1469.4,156.1 1470.2,156.8 1471.0,156.7 1471.8,156.3 1472.6,154.8 1473.4,155.8 1474.2,159.0 1475.0,160.7 1475.8,156.7 1476.6,156.4 1477.4,152.4 1478.2,158.2 1479.0,162.3 1479.8,162.6 1480.6,169.8 1481.4,169.5 1482.2,170.5 1483.0,164.1 1483.8,163.8 1484.6,167.9 1485.4,164.1 1486.2,164.9 1487.0,163.9 1487.8,164.8 1488.6,159.3 1489.4,158.3 1490.2,153.5 1491.0,158.3 1491.8,163.0 1492.6,160.8 1493.4,159.5 1494.2,154.8 1495.0,159.6 1495.8,158.8 1496.6,153.8 1497.4,156.8 1498.2,160.4 1499.0,154.3 1499.8,155.8 1500.6,149.3 1501.4,150.0 1502.2,147.4 1503.0,151.1 1503.8,155.2 1504.6,152.7 1505.4,148.8 1506.2,152.4 1507.0,148.9 1507.8,144.3 1508.6,141.0 1509.4,142.4 1510.2,146.1 1511.0,146.9 1511.8,148.1 1512.6,150.0 1513.4,148.1 1514.2,154.2 1515.0,147.6 1515.8,149.4 1516.6,146.0 1517.4,151.2 1518.2,149.1 1519.0,147.2 1519.8,149.3 1520.6,150.5 1521.4,147.5 1522.2,141.8 1523.0,147.4 1523.8,140.6 1524.6,143.3 1525.4,145.0 1526.2,143.5 1527.0,141.6 1527.8,147.1 1528.6,142.8 1529.4,142.8 1530.2,144.6 1531.0,143.4 1531.8,145.1 1532.6,143.4 1533.4,143.3 1534.2,143.3 1535.0,141.9 1535.8,142.4 1536.6,145.8 1537.4,143.5 1538.2,145.1 1539.0,142.9 1539.8,147.6 1540.6,143.4 1541.4,145.1 1542.2,144.0 1543.0,146.9 1543.8,144.7 1544.6,141.7 1545.4,140.0 1546.2,141.5 1547.0,147.0 1547.8,149.6 1548.6,148.1 1549.4,144.5 1550.2,146.6 1551.0,146.8 1551.8,144.6 1552.6,145.3 1553.4,142.6 1554.2,145.6 1555.0,156.1 1555.8,146.7 1556.6,149.2 1557.4,141.8 1558.2,150.1 1559.0,148.3 1559.8,150.5 1560.6,146.2 1561.4,145.5 1562.2,149.6 1563.0,156.5 1563.8,150.8 1564.6,150.3 1565.4,146.9 1566.2,156.2 1567.0,154.1 1567.8,151.9 1568.6,152.8 1569.4,146.9 1570.2,151.7 1571.0,147.9 1571.8,152.9 1572.6,153.7 1573.4,156.7 1574.2,155.7 1575.0,157.0 1575.8,154.5 1576.6,153.7 1577.4,156.3 1578.2,158.1 1579.0,158.8 1579.8,158.2 1580.6,158.9 1581.4,155.3 1582.2,155.6 1583.0,156.4 1583.8,165.0 1584.6,167.8 1585.4,168.4 1586.2,167.9 1587.0,165.6 1587.8,163.8 1588.6,168.5 1589.4,165.2 1590.2,165.5 1591.0,168.1 1591.8,165.0 1592.6,170.2 1593.4,171.0 1594.2,168.4 1595.0,168.4 1595.8,169.3 1596.6,172.8 1597.4,164.5 1598.2,167.2 1599.0,162.6 1599.8,159.0 1600.6,158.5 1601.4,159.5 1602.2,160.7 1603.0,162.8 1603.8,157.0 1604.6,159.4 1605.4,153.5 1606.2,158.7 1607.0,152.2 1607.8,161.2 1608.6,155.1 1609.4,152.2 1610.2,154.7 1611.0,150.6 1611.8,154.7 1612.6,149.6 1613.4,152.0 1614.2,146.1 1615.0,154.1 1615.8,153.3 1616.6,148.0 1617.4,142.6 1618.2,144.8 1619.0,148.9 1619.8,148.6 1620.6,149.9 1621.4,157.0 1622.2,147.5 1623.0,148.1 1623.8,145.7 1624.6,141.1 1625.4,143.1 1626.2,141.8 1627.0,144.8 1627.8,143.8 1628.6,143.3 1629.4,139.4 1630.2,145.5 1631.0,144.2 1631.8,142.5 1632.6,140.7 1633.4,144.7 1634.2,144.1 1635.0,132.7 1635.8,136.4 1636.6,143.8 1637.4,146.1 1638.2,146.0 1639.0,139.2 1639.8,138.3 1640.6,142.9 1641.4,140.9 1642.2,144.0 1643.0,138.5 1643.8,149.2 1644.6,145.6 1645.4,139.9 1646.2,147.5 1647.0,144.4 1647.8,141.8 1648.6,140.0 1649.4,144.4 1650.2,143.4 1651.0,144.0 1651.8,139.6 1652.6,140.5 1653.4,140.2 1654.2,135.3 1655.0,147.7 1655.8,142.7 1656.6,147.5 1657.4,142.3 1658.2,148.7 1659.0,147.8 1659.8,146.1 1660.6,143.0 1661.4,140.7 1662.2,141.6 1663.0,144.7 1663.8,141.6 1664.6,141.6 1665.4,137.0 1666.2,143.8 1667.0,144.8 1667.8,143.5 1668.6,146.0 1669.4,147.0 1670.2,149.3 1671.0,145.4 1671.8,140.6 1672.6,142.3 1673.4,143.1 1674.2,146.9 1675.0,147.2 1675.8,141.1 1676.6,148.0 1677.4,147.5 1678.2,146.7 1679.0,148.0 1679.8,147.7 1680.6,145.4 1681.4,147.6 1682.2,146.6 1683.0,148.2 1683.8,150.9 1684.6,146.8 1685.4,148.9 1686.2,146.2 1687.0,150.7 1687.8,147.2 1688.6,152.3 1689.4,160.4 1690.2,154.4 1691.0,154.6 1691.8,154.9 1692.6,160.4 1693.4,156.8 1694.2,158.9 1695.0,157.8 1695.8,158.6 1696.6,169.0 1697.4,172.1 1698.2,162.2 1699.0,160.8 1699.8,174.7 1700.6,173.9 1701.4,169.2 1702.2,168.4 1703.0,173.5 1703.8,174.3 1704.6,178.5 1705.4,174.4 1706.2,170.9 1707.0,166.6 1707.8,168.1 1708.6,165.5 1709.4,164.9 1710.2,166.4 1711.0,162.3 1711.8,152.7 1712.6,156.2 1713.4,155.7 1714.2,156.9 1715.0,160.5 1715.8,157.9 1716.6,160.6 1717.4,156.9 1718.2,154.9 1719.0,154.7 1719.8,155.9 1720.6,153.4 1721.4,149.8 1722.2,163.8 1723.0,181.6 1723.8,191.9 1724.6,190.1 1725.4,193.5 1726.2,197.0 1727.0,196.0 1727.8,197.1 1728.6,195.0 1729.4,191.5 1730.2,197.2 1731.0,198.2 1731.8,200.6 1732.6,198.9 1733.4,202.1 1734.2,208.2 1735.0,201.4 1735.8,202.2 1736.6,204.4 1737.4,202.0 1738.2,207.5 1739.0,207.5 1739.8,209.2 1740.6,210.8 1741.4,213.1 1742.2,213.8 1743.0,214.6 1743.8,211.5 1744.6,214.4 1745.4,212.1 1746.2,212.0 1747.0,214.8 1747.8,211.7 1748.6,213.0 1749.4,213.2 1750.2,218.3 1751.0,212.4 1751.8,216.8 1752.6,217.4 1753.4,215.8 1754.2,217.6 1755.0,217.3 1755.8,214.0 1756.6,216.4 1757.4,216.9 1758.2,211.9 1759.0,214.2 1759.8,215.0 1760.6,204.4 1761.4,209.4 1762.2,210.4 1763.0,208.7 1763.8,209.7 1764.6,209.4 1765.4,209.4 1766.2,209.1 1767.0,208.2 1767.8,214.5 1768.6,215.6 1769.4,212.3 1770.2,215.8 1771.0,210.7 1771.8,214.8 1772.6,211.0 1773.4,210.2 1774.2,217.4 1775.0,211.4 1775.8,208.5 1776.6,214.8 1777.4,213.6 1778.2,209.0 1779.0,211.5 1779.8,206.7 1780.6,206.3 1781.4,213.1 1782.2,208.2 1783.0,205.3 1783.8,207.9 1784.6,208.0 1785.4,204.1 1786.2,210.8 1787.0,215.1 1787.8,205.5 1788.6,212.9 1789.4,207.9 1790.2,202.8 1791.0,205.0 1791.8,207.6 1792.6,204.2 1793.4,200.7 1794.2,208.1 1795.0,208.2 1795.8,203.4 1796.6,200.8 1797.4,204.2 1798.2,201.4 1799.0,203.4 1799.8,202.5 1800.6,201.0 1801.4,204.3 1802.2,203.7 1803.0,199.4 1803.8,210.3 1804.6,203.5 1805.4,200.8 1806.2,201.3 1807.0,200.2 1807.8,207.4 1808.6,198.7 1809.4,199.5 1810.2,206.0 1811.0,199.8 1811.8,204.2 1812.6,205.8 1813.4,202.2 1814.2,211.3 1815.0,205.6 1815.8,200.5 1816.6,199.1 1817.4,198.3 1818.2,198.3 1819.0,204.6 1819.8,204.2 1820.6,202.8 1821.4,195.9 1822.2,198.2 1823.0,197.3 1823.8,200.2 1824.6,201.3 1825.4,204.3 1826.2,203.6 1827.0,199.5" fill="none" stroke="#ececec" stroke-width="1.25" stroke-linejoin="round"/></g>
<path d="M1403.2,54 V275" stroke="#f6f63c" stroke-width="1.4"/>
<rect x="978.5" y="53.8" width="848.9000000000001" height="221.4" fill="none" stroke="#a4a4a4" stroke-width="1.6"/>
<text x="963.50" y="61.9" font-size="20" fill="#fff" text-anchor="end">40.0</text>
<text x="963.50" y="106.1" font-size="20" fill="#fff" text-anchor="end">20.0</text>
<text x="963.50" y="150.2" font-size="20" fill="#fff" text-anchor="end">0.0</text>
<text x="963.50" y="194.3" font-size="20" fill="#fff" text-anchor="end">-20.0</text>
<text x="963.50" y="238.5" font-size="20" fill="#fff" text-anchor="end">-40.0</text>
<text x="963.50" y="282.6" font-size="20" fill="#fff" text-anchor="end">-60.0</text>
<text x="1005.60" y="306.0" font-size="20" fill="#fff" text-anchor="middle">226.4</text>
<text x="1088.40" y="306.0" font-size="20" fill="#fff" text-anchor="middle">226.6</text>
<text x="1171.20" y="306.0" font-size="20" fill="#fff" text-anchor="middle">226.8</text>
<text x="1254.00" y="306.0" font-size="20" fill="#fff" text-anchor="middle">227</text>
<text x="1336.80" y="306.0" font-size="20" fill="#fff" text-anchor="middle">227.2</text>
<text x="1419.60" y="306.0" font-size="20" fill="#fff" text-anchor="middle">227.4</text>
<text x="1502.40" y="306.0" font-size="20" fill="#fff" text-anchor="middle">227.6</text>
<text x="1585.20" y="306.0" font-size="20" fill="#fff" text-anchor="middle">227.8</text>
<text x="1668.00" y="306.0" font-size="20" fill="#fff" text-anchor="middle">228</text>
<text x="1750.80" y="306.0" font-size="20" fill="#fff" text-anchor="middle">228.2</text>
<text x="1402.40" y="338.2" font-size="23.4" fill="#fff" text-anchor="middle">Frequency (MHz)</text>
<text transform="translate(883,165.8) rotate(-90)" font-size="23.4" fill="#fff" text-anchor="middle">Magnitude (dB)</text>
<rect x="0" y="358" width="1861" height="7" fill="#8a8a8a"/>
<rect x="0" y="365" width="1861" height="59" fill="#262626"/>
<rect x="520" y="365" width="221" height="59" fill="#323232"/>
<rect x="141" y="365" width="379" height="59" fill="#1a5e1a"/>
<rect x="141" y="365" width="1" height="59" fill="#b0c8b0"/>
<rect x="740.5" y="365" width="4.5" height="59" fill="#f0f0f0"/>
<rect x="0" y="424" width="1861" height="1" fill="#dfe6ee"/>
<rect x="36.5" y="380.5" width="89" height="32" rx="3" fill="#262626" stroke="#7c7c7c" stroke-width="1"/>
<text class="u" x="38.44" y="402.7" font-size="19.3" fill="#fff" text-anchor="start" textLength="33.23" lengthAdjust="spacingAndGlyphs">12C</text>
<path d="M93.5,392 L108,392 L100.75,400 Z" fill="#fff"/>
<text class="u" x="163.80" y="404.9" font-size="24" fill="#63b863" text-anchor="start" textLength="96.30" lengthAdjust="spacingAndGlyphs">EId: 9001</text>
<text class="u" x="289.42" y="404.9" font-size="24" fill="#6fc420" text-anchor="start" textLength="95.38" lengthAdjust="spacingAndGlyphs">DK DAB1</text>
<g clip-path="url(#clipG)">
<text class="u" x="415.79" y="404.9" font-size="24" fill="#63b863" text-anchor="start" textLength="121.89" lengthAdjust="spacingAndGlyphs">2022-07-11</text>
</g>
<g clip-path="url(#clipN)">
<text class="u" x="415.79" y="404.9" font-size="24" fill="#fff" text-anchor="start" textLength="121.89" lengthAdjust="spacingAndGlyphs">2022-07-11</text>
</g>
<text class="u" x="551.86" y="404.9" font-size="24" fill="#fff" text-anchor="start" textLength="109.46" lengthAdjust="spacingAndGlyphs">22:40:30 Z</text>
<rect x="760.5" y="380.5" width="37.5" height="32" rx="3" fill="#262626" stroke="#7c7c7c" stroke-width="1"/>
<path d="M771,392 L786.3,392 L778.65,400 Z" fill="#fff"/>
<circle cx="850" cy="397.6" r="17.2" fill="#1c6096"/><circle cx="850" cy="397.6" r="7.7" fill="#ff0a0a"/>
<circle cx="902.7" cy="397.6" r="17.2" fill="#1f4668"/><rect x="896" y="390.5" width="13" height="14.5" fill="#141414"/>
<rect x="1795.5" y="378.5" width="80" height="32.5" rx="3" fill="#262626" stroke="#7c7c7c" stroke-width="1"/>
<text class="u" x="1796.50" y="401.0" font-size="19.8" fill="#fff" text-anchor="start" textLength="38.45" lengthAdjust="spacingAndGlyphs">DAB</text>
<path d="M1851,390 L1866,390 L1858.5,398 Z" fill="#fff"/>
<rect x="0" y="425" width="291" height="51" fill="#0e2d50"/>
<rect x="0" y="476" width="291" height="464" fill="#1b5886"/>
<rect x="291" y="425" width="7" height="515" fill="#ececec"/>
<text class="u" x="5.08" y="459.4" font-size="29.2" fill="#ffff1e" text-anchor="start" textLength="262.74" lengthAdjust="spacingAndGlyphs">No Service Selected</text>
<rect x="7.4" y="508.8" width="9.7" height="1.6" fill="#fff"/>
<text class="u" x="16.67" y="506.2" font-size="21.7" fill="#fff" text-anchor="start" textLength="93.15" lengthAdjust="spacingAndGlyphs">myROCK</text>
<rect x="7.4" y="546.7" width="9.7" height="1.6" fill="#fff"/>
<text class="u" x="16.83" y="544.1" font-size="21.7" fill="#fff" text-anchor="start" textLength="64.52" lengthAdjust="spacingAndGlyphs">NOVA</text>
<rect x="7.4" y="584.6" width="9.7" height="1.6" fill="#fff"/>
<text class="u" x="16.83" y="582.0" font-size="21.7" fill="#fff" text-anchor="start" textLength="81.87" lengthAdjust="spacingAndGlyphs">Pop FM</text>
<rect x="7.4" y="622.5" width="9.7" height="1.6" fill="#fff"/>
<text class="u" x="16.82" y="619.9" font-size="21.7" fill="#fff" text-anchor="start" textLength="107.00" lengthAdjust="spacingAndGlyphs">Radio 100</text>
<rect x="7.4" y="660.4" width="9.7" height="1.6" fill="#fff"/>
<text class="u" x="16.82" y="657.8" font-size="21.7" fill="#fff" text-anchor="start" textLength="109.48" lengthAdjust="spacingAndGlyphs">Radio Soft</text>
<rect x="7.4" y="698.3" width="9.7" height="1.6" fill="#fff"/>
<text class="u" x="17.14" y="695.7" font-size="21.7" fill="#fff" text-anchor="start" textLength="102.84" lengthAdjust="spacingAndGlyphs">The Voice</text>
<text class="u" x="6.77" y="733.6" font-size="21.7" fill="#fff" text-anchor="start" textLength="59.19" lengthAdjust="spacingAndGlyphs">24syv</text>
<text class="u" x="6.38" y="771.5" font-size="21.7" fill="#fff" text-anchor="start" textLength="188.34" lengthAdjust="spacingAndGlyphs">BBC WorldService</text>
<text class="u" x="6.34" y="809.4" font-size="21.7" fill="#fff" text-anchor="start" textLength="57.34" lengthAdjust="spacingAndGlyphs">mix 7</text>
<text class="u" x="6.32" y="847.3" font-size="21.7" fill="#fff" text-anchor="start" textLength="133.55" lengthAdjust="spacingAndGlyphs">PopFM 80'er</text>
<text class="u" x="6.28" y="885.2" font-size="21.7" fill="#fff" text-anchor="start" textLength="120.88" lengthAdjust="spacingAndGlyphs">Radio Vinyl</text>
<rect x="298" y="425" width="272" height="51" fill="#0e2d50"/>
<rect x="298" y="476" width="272" height="464" fill="#1b5886"/>
<rect x="570" y="425" width="4" height="515" fill="#b8c4d8"/>
<text class="u" x="305.00" y="459.4" font-size="29.2" fill="#fff" text-anchor="start" textLength="195.00" lengthAdjust="spacingAndGlyphs">Service Quality</text>
<text class="u" x="312.83" y="519.6" font-size="20.6" fill="#fff" text-anchor="start" textLength="82.85" lengthAdjust="spacingAndGlyphs">SNR (dB)</text>
<rect x="493" y="492.3" width="60" height="37.3" fill="#808080"/>
<rect x="493" y="492.3" width="38.0" height="37.3" fill="#008000"/>
<text class="u" x="512.81" y="518.1" font-size="18" fill="#e6f6e6" text-anchor="start" textLength="19.88" lengthAdjust="spacingAndGlyphs">22</text>
<text class="u" x="312.11" y="565.6" font-size="20.6" fill="#fff" text-anchor="start" textLength="94.68" lengthAdjust="spacingAndGlyphs">FIC (ok %)</text>
<rect x="493" y="538.3" width="60" height="37.3" fill="#808080"/>
<rect x="493" y="538.3" width="60.0" height="37.3" fill="#008000"/>
<text class="u" x="523.00" y="564.1" font-size="18" fill="#e6f6e6" text-anchor="middle">100</text>
<text class="u" x="312.14" y="611.6" font-size="20.6" fill="#fff" text-anchor="start" textLength="89.06" lengthAdjust="spacingAndGlyphs">RS (ok %)</text>
<rect x="493" y="584.3" width="60" height="37.3" fill="#808080"/>
<text class="u" x="311.99" y="657.6" font-size="20.6" fill="#fff" text-anchor="start" textLength="114.31" lengthAdjust="spacingAndGlyphs">Null Symbol</text>
<rect x="493" y="630.3" width="60" height="37.3" fill="#808080"/>
<rect x="493" y="630.3" width="60.0" height="37.3" fill="#008000"/>
<text class="u" x="312.78" y="703.6" font-size="20.6" fill="#fff" text-anchor="start" textLength="159.88" lengthAdjust="spacingAndGlyphs">SymbolTime (ms)</text>
<rect x="493" y="676.3" width="60" height="37.3" fill="#808080"/>
<rect x="493" y="676.3" width="14.8" height="37.3" fill="#008000"/>
<text class="u" x="506.04" y="702.1" font-size="18" fill="#e6f6e6" text-anchor="start" textLength="34.02" lengthAdjust="spacingAndGlyphs">0,36</text>
<text class="u" x="312.07" y="749.6" font-size="20.6" fill="#fff" text-anchor="start" textLength="149.47" lengthAdjust="spacingAndGlyphs">FrameTime (ms)</text>
<rect x="493" y="722.3" width="60" height="37.3" fill="#808080"/>
<rect x="493" y="722.3" width="38.0" height="37.3" fill="#008000"/>
<text class="u" x="505.93" y="748.1" font-size="18" fill="#e6f6e6" text-anchor="start" textLength="33.10" lengthAdjust="spacingAndGlyphs">96,1</text>
<rect x="574" y="425" width="523.5" height="515" fill="#0e2d50"/>
<rect x="586" y="476" width="511.5" height="464" fill="#1b5886"/>
<rect x="1091" y="476" width="6.5" height="464" fill="#1a5480"/>
<rect x="1097.5" y="425" width="7.5" height="515" fill="#f0f0f0"/>
<path d="M586.5,476.5 L586.5,442.5 Q586.5,436.5 592.5,436.5 L658,436.5 Q675,436.5 675,453.5 L675,476.5 Z" fill="#858585" stroke="#9a9a9a" stroke-width="1"/>
<text class="u" x="604.83" y="467.2" font-size="24.6" fill="#d8d8d8" text-anchor="start" textLength="52.78" lengthAdjust="spacingAndGlyphs">Sync</text>
<path d="M676,476.5 L676,442.5 Q676,436.5 682,436.5 L724.3,436.5 Q741.3,436.5 741.3,453.5 L741.3,476.5 Z" fill="#1b5886" stroke="#3d78a4" stroke-width="1"/>
<rect x="676.5" y="475" width="64.29999999999995" height="3" fill="#1b5886"/>
<text class="u" x="695.81" y="467.2" font-size="24.6" fill="#fff" text-anchor="start" textLength="28.42" lengthAdjust="spacingAndGlyphs">TII</text>
<path d="M742,476.5 L742,442.5 Q742,436.5 748,436.5 L830,436.5 Q847,436.5 847,453.5 L847,476.5 Z" fill="#858585" stroke="#9a9a9a" stroke-width="1"/>
<text class="u" x="762.40" y="467.2" font-size="24.6" fill="#d8d8d8" text-anchor="start" textLength="67.05" lengthAdjust="spacingAndGlyphs">Audio</text>
<path d="M848,476.5 L848,442.5 Q848,436.5 854,436.5 L917,436.5 Q934,436.5 934,453.5 L934,476.5 Z" fill="#858585" stroke="#9a9a9a" stroke-width="1"/>
<text class="u" x="868.50" y="467.2" font-size="24.6" fill="#d8d8d8" text-anchor="start" textLength="48.05" lengthAdjust="spacingAndGlyphs">AAC</text>
<path d="M935,476.5 L935,442.5 Q935,436.5 941,436.5 L1046.6,436.5 Q1063.6,436.5 1063.6,453.5 L1063.6,476.5 Z" fill="#858585" stroke="#9a9a9a" stroke-width="1"/>
<text class="u" x="954.53" y="467.2" font-size="24.6" fill="#d8d8d8" text-anchor="start" textLength="89.96" lengthAdjust="spacingAndGlyphs">Options</text>
<circle cx="633" cy="499.1" r="6.8" fill="#ff0a0a"/>
<rect x="670" y="492.5" width="13" height="13" fill="#0f2d4a"/>
<rect x="597" y="521.3" width="371" height="1" fill="#9db6cb"/>
<rect x="597" y="575.3" width="371" height="1" fill="#9db6cb"/>
<rect x="983" y="476" width="1" height="464" fill="#4c86b2"/>
<text class="u" x="595.49" y="568.3" font-size="22.2" fill="#fff" text-anchor="start" textLength="72.96" lengthAdjust="spacingAndGlyphs">Pattern</text>
<text class="u" x="696.10" y="568.3" font-size="22.2" fill="#fff" text-anchor="start" textLength="71.43" lengthAdjust="spacingAndGlyphs">MainId</text>
<text class="u" x="795.99" y="568.3" font-size="22.2" fill="#fff" text-anchor="start" textLength="58.74" lengthAdjust="spacingAndGlyphs">SubId</text>
<text class="u" x="882.97" y="568.3" font-size="22.2" fill="#fff" text-anchor="start" textLength="86.36" lengthAdjust="spacingAndGlyphs">Strength</text>
<text class="u" x="599.01" y="613.2" font-size="19.3" fill="#fff" text-anchor="start" textLength="45.96" lengthAdjust="spacingAndGlyphs">0x1b</text>
<text class="u" x="700.03" y="613.2" font-size="19.3" fill="#fff" text-anchor="start">2</text>
<text class="u" x="799.16" y="613.2" font-size="19.3" fill="#fff" text-anchor="start" textLength="22.86" lengthAdjust="spacingAndGlyphs">10</text>
<text class="u" x="885.74" y="613.2" font-size="19.3" fill="#fff" text-anchor="start" textLength="39.35" lengthAdjust="spacingAndGlyphs">0.97</text>
<text class="u" x="599.01" y="650.4" font-size="19.3" fill="#fff" text-anchor="start" textLength="45.96" lengthAdjust="spacingAndGlyphs">0x1b</text>
<text class="u" x="700.03" y="650.4" font-size="19.3" fill="#fff" text-anchor="start">2</text>
<text class="u" x="799.83" y="650.4" font-size="19.3" fill="#fff" text-anchor="start">9</text>
<text class="u" x="885.74" y="650.4" font-size="19.3" fill="#fff" text-anchor="start" textLength="39.35" lengthAdjust="spacingAndGlyphs">0.62</text>
<text class="u" x="599.00" y="687.6" font-size="19.3" fill="#fff" text-anchor="start" textLength="46.13" lengthAdjust="spacingAndGlyphs">0x17</text>
<text class="u" x="699.55" y="687.6" font-size="19.3" fill="#fff" text-anchor="start">1</text>
<text class="u" x="799.74" y="687.6" font-size="19.3" fill="#fff" text-anchor="start">2</text>
<text class="u" x="885.75" y="687.6" font-size="19.3" fill="#fff" text-anchor="start" textLength="39.14" lengthAdjust="spacingAndGlyphs">0.10</text>
<text class="u" x="991.09" y="523.6" font-size="21.2" fill="#fff" text-anchor="start" textLength="92.25" lengthAdjust="spacingAndGlyphs">Threshold</text>
<rect x="1031.2" y="564" width="3.8" height="167" rx="1.9" fill="#dcdcdc"/>
<circle cx="1033" cy="711.6" r="10" fill="url(#thumbv)"/>
<text class="u" x="1011.96" y="761.6" font-size="19.3" fill="#fff" text-anchor="start" textLength="38.56" lengthAdjust="spacingAndGlyphs">0.08</text>
<path d="M0,939.5 H1097" stroke="#071a30" stroke-width="1" stroke-dasharray="1,1"/>
<rect x="1105" y="425" width="756" height="30.5" fill="#0e2d50"/>
<rect x="1105" y="455.5" width="756" height="239.5" fill="#000"/>
<text class="u" x="1338.73" y="446.5" font-size="23.3" fill="#fff" text-anchor="start" textLength="319.79" lengthAdjust="spacingAndGlyphs">Channel Impulse Response (CIR)</text>
<path d="M1840.5,433 L1858.5,433 L1849.5,448.5 Z" fill="none" stroke="#c4d0e4" stroke-width="1.3"/>
<g clip-path="url(#clipCirCtl)">
<circle cx="1130" cy="482.2" r="9.6" fill="#e2e2e2"/>
<text class="u" x="1144.65" y="489.3" font-size="19" fill="#fff" text-anchor="start" textLength="52.61" lengthAdjust="spacingAndGlyphs">Freeze</text>
<circle cx="1236.4" cy="482.2" r="9.6" fill="#e2e2e2"/>
<text class="u" x="1252.10" y="489.3" font-size="19" fill="#fff" text-anchor="start" textLength="69.00" lengthAdjust="spacingAndGlyphs">Gradient</text>
<text class="u" x="1127.19" y="550.9" font-size="19" fill="#fff" text-anchor="start" textLength="133.97" lengthAdjust="spacingAndGlyphs">Smoothing Level</text>
<rect x="1130.0" y="563.5" width="1.5" height="6" fill="#b8b8b8"/>
<rect x="1149.7" y="563.5" width="1.5" height="6" fill="#b8b8b8"/>
<rect x="1169.4" y="563.5" width="1.5" height="6" fill="#b8b8b8"/>
<rect x="1189.1" y="563.5" width="1.5" height="6" fill="#b8b8b8"/>
<rect x="1208.8" y="563.5" width="1.5" height="6" fill="#b8b8b8"/>
<rect x="1228.5" y="563.5" width="1.5" height="6" fill="#b8b8b8"/>
<rect x="1248.2" y="563.5" width="1.5" height="6" fill="#b8b8b8"/>
<rect x="1267.9" y="563.5" width="1.5" height="6" fill="#b8b8b8"/>
<rect x="1287.6" y="563.5" width="1.5" height="6" fill="#b8b8b8"/>
<rect x="1307.3" y="563.5" width="1.5" height="6" fill="#b8b8b8"/>
<rect x="1120.5" y="577.5" width="206.0" height="4" rx="2" fill="#e4e4e4"/>
<circle cx="1169.4" cy="580.0" r="9.5" fill="url(#thumb)"/>
<text class="u" x="1127.46" y="631.6" font-size="19" fill="#fff" text-anchor="start" textLength="62.67" lengthAdjust="spacingAndGlyphs">Zoom X</text>
<rect x="1122" y="652.5" width="204.5" height="4" rx="2" fill="#e4e4e4"/>
<circle cx="1130" cy="655.0" r="9.5" fill="url(#thumb)"/>
<text class="u" x="1127.47" y="707.0" font-size="19" fill="#fff" text-anchor="start" textLength="61.94" lengthAdjust="spacingAndGlyphs">Zoom Y</text>
</g>
<rect x="1336" y="457.5" width="7.5" height="130" rx="3.7" fill="#a6a6a6"/>
<rect x="1546.3" y="475.7" width="13.2" height="140.00000000000006" fill="#404040"/>
<path d="M1482.2,475.7 V615.7 M1508.0,475.7 V615.7 M1533.7,475.7 V615.7 M1559.5,475.7 V615.7 M1585.3,475.7 V615.7 M1611.0,475.7 V615.7 M1636.8,475.7 V615.7 M1662.5,475.7 V615.7 M1688.3,475.7 V615.7 M1714.1,475.7 V615.7 M1739.8,475.7 V615.7 M1765.6,475.7 V615.7 M1791.3,475.7 V615.7 M1817.1,475.7 V615.7 M1842.9,475.7 V615.7 M1465,503.7 H1849.2 M1465,531.7 H1849.2 M1465,559.7 H1849.2 M1465,587.7 H1849.2" stroke="#8c8c8c" stroke-width="1" fill="none"/>
<g clip-path="url(#clipCir)"><polyline points="1465.0,570.6 1465.6,571.8 1466.2,571.7 1466.8,586.7 1467.4,565.5 1468.0,558.8 1468.6,569.7 1469.2,571.5 1469.8,565.5 1470.4,564.8 1471.0,572.2 1471.6,577.9 1472.2,564.9 1472.8,579.7 1473.4,566.7 1474.0,575.0 1474.6,595.2 1475.2,573.0 1475.8,589.1 1476.4,578.4 1477.0,560.6 1477.6,579.2 1478.2,566.2 1478.8,573.7 1479.4,584.6 1480.0,574.4 1480.6,560.3 1481.2,564.0 1481.8,564.9 1482.4,558.5 1483.0,566.9 1483.6,589.3 1484.2,579.5 1484.8,573.7 1485.4,571.1 1486.0,583.4 1486.6,579.4 1487.2,562.1 1487.8,564.2 1488.4,586.6 1489.0,579.8 1489.6,565.8 1490.2,582.4 1490.8,580.2 1491.4,570.4 1492.0,569.7 1492.6,590.9 1493.2,571.2 1493.8,564.0 1494.4,568.8 1495.0,576.5 1495.6,545.5 1496.2,568.0 1496.8,589.2 1497.4,563.7 1498.0,566.5 1498.6,568.9 1499.2,574.6 1499.8,571.2 1500.4,571.0 1501.0,569.8 1501.6,567.9 1502.2,570.9 1502.8,588.2 1503.4,570.5 1504.0,568.5 1504.6,562.8 1505.2,577.5 1505.8,582.5 1506.4,573.8 1507.0,569.0 1507.6,566.0 1508.2,575.1 1508.8,584.1 1509.4,564.8 1510.0,578.0 1510.6,578.1 1511.2,569.6 1511.8,564.9 1512.4,570.5 1513.0,567.8 1513.6,556.0 1514.2,594.9 1514.8,583.4 1515.4,573.1 1516.0,565.3 1516.6,580.4 1517.2,594.6 1517.8,581.2 1518.4,567.5 1519.0,566.2 1519.6,562.2 1520.2,566.8 1520.8,568.7 1521.4,569.8 1522.0,560.4 1522.6,579.5 1523.2,568.1 1523.8,561.9 1524.4,570.1 1525.0,561.4 1525.6,586.4 1526.2,564.9 1526.8,563.9 1527.4,580.1 1528.0,581.7 1528.6,565.5 1529.2,559.2 1529.8,585.3 1530.4,575.1 1531.0,569.1 1531.6,574.1 1532.2,560.3 1532.8,557.1 1533.4,577.5 1534.0,547.4 1534.6,571.0 1535.2,568.7 1535.8,567.5 1536.4,558.3 1537.0,580.2 1537.6,558.6 1538.2,576.4 1538.8,579.4 1539.4,575.8 1540.0,571.1 1540.6,580.3 1541.2,566.0 1541.8,565.3 1542.4,567.6 1543.0,573.7 1543.6,564.3 1544.2,556.8 1544.8,557.6 1545.4,568.4 1546.0,546.7 1546.6,570.0 1547.2,576.9 1547.8,555.9 1548.4,546.9 1549.0,551.4 1549.6,560.0 1550.2,555.5 1550.8,572.3 1551.4,557.3 1552.0,565.7 1552.6,540.8 1553.2,571.5 1553.8,546.0 1554.4,548.3 1555.0,548.6 1555.6,542.7 1556.2,536.6 1556.8,511.5 1557.4,521.5 1558.0,512.8 1558.6,498.8 1559.2,485.3 1559.8,485.7 1560.4,499.5 1561.0,511.6 1561.6,524.6 1562.2,533.3 1562.8,535.8 1563.4,540.6 1564.0,544.8 1564.6,545.2 1565.2,545.8 1565.8,550.7 1566.4,556.9 1567.0,558.8 1567.6,547.7 1568.2,545.8 1568.8,555.7 1569.4,557.2 1570.0,549.7 1570.6,570.4 1571.2,579.3 1571.8,560.8 1572.4,567.2 1573.0,567.6 1573.6,585.3 1574.2,573.3 1574.8,554.1 1575.4,549.2 1576.0,554.3 1576.6,551.4 1577.2,553.6 1577.8,551.3 1578.4,577.5 1579.0,573.0 1579.6,577.3 1580.2,566.0 1580.8,566.9 1581.4,548.9 1582.0,572.4 1582.6,559.5 1583.2,571.5 1583.8,563.8 1584.4,574.8 1585.0,556.4 1585.6,584.2 1586.2,563.5 1586.8,583.0 1587.4,565.2 1588.0,566.8 1588.6,561.3 1589.2,574.0 1589.8,560.9 1590.4,550.5 1591.0,538.7 1591.6,530.9 1592.2,542.6 1592.8,554.4 1593.4,565.5 1594.0,572.0 1594.6,575.0 1595.2,571.9 1595.8,572.6 1596.4,562.4 1597.0,562.8 1597.6,556.6 1598.2,560.8 1598.8,569.5 1599.4,573.9 1600.0,566.7 1600.6,554.9 1601.2,543.2 1601.8,543.2 1602.4,554.9 1603.0,566.0 1603.6,561.0 1604.2,561.4 1604.8,562.6 1605.4,564.7 1606.0,564.5 1606.6,562.0 1607.2,555.2 1607.8,543.5 1608.4,551.3 1609.0,563.1 1609.6,560.0 1610.2,559.1 1610.8,567.3 1611.4,569.6 1612.0,562.8 1612.6,577.9 1613.2,573.1 1613.8,572.7 1614.4,562.1 1615.0,568.9 1615.6,590.1 1616.2,575.9 1616.8,566.1 1617.4,573.7 1618.0,562.2 1618.6,550.5 1619.2,538.7 1619.8,550.5 1620.4,562.2 1621.0,571.0 1621.6,574.1 1622.2,561.7 1622.8,562.1 1623.4,568.7 1624.0,556.9 1624.6,545.1 1625.2,533.4 1625.8,521.6 1626.4,525.5 1627.0,537.3 1627.6,549.1 1628.2,560.8 1628.8,570.6 1629.4,561.8 1630.0,568.3 1630.6,573.5 1631.2,573.8 1631.8,572.3 1632.4,571.4 1633.0,562.0 1633.6,572.0 1634.2,567.8 1634.8,554.6 1635.4,566.8 1636.0,568.4 1636.6,571.8 1637.2,577.9 1637.8,558.6 1638.4,573.5 1639.0,580.9 1639.6,565.2 1640.2,562.3 1640.8,551.9 1641.4,540.1 1642.0,532.3 1642.6,544.0 1643.2,555.8 1643.8,567.5 1644.4,563.8 1645.0,591.1 1645.6,566.8 1646.2,569.8 1646.8,567.8 1647.4,561.0 1648.0,570.2 1648.6,556.4 1649.2,563.1 1649.8,567.7 1650.4,577.2 1651.0,574.6 1651.6,571.3 1652.2,582.3 1652.8,569.3 1653.4,561.3 1654.0,568.5 1654.6,576.1 1655.2,569.2 1655.8,569.8 1656.4,580.3 1657.0,567.6 1657.6,566.0 1658.2,553.9 1658.8,582.4 1659.4,580.8 1660.0,569.7 1660.6,593.0 1661.2,559.7 1661.8,573.3 1662.4,566.0 1663.0,556.2 1663.6,573.5 1664.2,562.3 1664.8,573.1 1665.4,590.5 1666.0,566.8 1666.6,576.6 1667.2,584.2 1667.8,574.2 1668.4,571.3 1669.0,574.3 1669.6,562.5 1670.2,563.9 1670.8,579.7 1671.4,562.9 1672.0,584.6 1672.6,595.0 1673.2,576.5 1673.8,565.5 1674.4,570.4 1675.0,563.3 1675.6,562.0 1676.2,580.6 1676.8,563.5 1677.4,575.9 1678.0,564.1 1678.6,569.8 1679.2,592.2 1679.8,577.2 1680.4,568.2 1681.0,562.2 1681.6,580.3 1682.2,581.4 1682.8,569.3 1683.4,569.4 1684.0,580.2 1684.6,569.4 1685.2,587.9 1685.8,572.3 1686.4,570.9 1687.0,566.6 1687.6,567.7 1688.2,572.0 1688.8,545.6 1689.4,575.8 1690.0,582.6 1690.6,576.5 1691.2,572.8 1691.8,569.4 1692.4,582.9 1693.0,571.0 1693.6,567.5 1694.2,580.4 1694.8,571.6 1695.4,571.3 1696.0,565.1 1696.6,596.2 1697.2,574.7 1697.8,590.1 1698.4,572.5 1699.0,584.6 1699.6,578.0 1700.2,582.0 1700.8,569.1 1701.4,586.3 1702.0,569.9 1702.6,579.1 1703.2,596.9 1703.8,562.2 1704.4,570.8 1705.0,567.2 1705.6,581.0 1706.2,598.5 1706.8,571.1 1707.4,574.9 1708.0,565.8 1708.6,562.8 1709.2,578.2 1709.8,579.8 1710.4,574.1 1711.0,578.5 1711.6,570.1 1712.2,585.3 1712.8,584.4 1713.4,580.7 1714.0,572.3 1714.6,578.7 1715.2,579.2 1715.8,585.3 1716.4,566.1 1717.0,579.2 1717.6,579.3 1718.2,554.6 1718.8,591.6 1719.4,570.2 1720.0,578.4 1720.6,586.8 1721.2,580.5 1721.8,587.6 1722.4,571.2 1723.0,584.2 1723.6,578.0 1724.2,583.3 1724.8,583.7 1725.4,573.0 1726.0,563.1 1726.6,566.0 1727.2,572.2 1727.8,582.9 1728.4,577.3 1729.0,578.4 1729.6,581.3 1730.2,576.2 1730.8,582.6 1731.4,577.3 1732.0,571.3 1732.6,598.4 1733.2,593.3 1733.8,575.6 1734.4,579.7 1735.0,579.1 1735.6,581.6 1736.2,576.0 1736.8,578.6 1737.4,569.6 1738.0,577.3 1738.6,568.2 1739.2,565.8 1739.8,575.0 1740.4,562.4 1741.0,582.5 1741.6,597.9 1742.2,582.1 1742.8,574.0 1743.4,567.9 1744.0,578.6 1744.6,570.4 1745.2,563.1 1745.8,572.3 1746.4,577.9 1747.0,574.1 1747.6,579.0 1748.2,587.1 1748.8,588.7 1749.4,575.7 1750.0,584.9 1750.6,593.7 1751.2,568.3 1751.8,581.1 1752.4,578.5 1753.0,567.4 1753.6,570.1 1754.2,568.0 1754.8,570.8 1755.4,597.1 1756.0,562.0 1756.6,576.0 1757.2,563.9 1757.8,569.7 1758.4,579.5 1759.0,586.8 1759.6,573.1 1760.2,578.7 1760.8,579.5 1761.4,568.3 1762.0,569.8 1762.6,584.9 1763.2,563.5 1763.8,586.5 1764.4,572.3 1765.0,579.5 1765.6,576.8 1766.2,591.3 1766.8,589.7 1767.4,557.5 1768.0,573.9 1768.6,575.9 1769.2,570.2 1769.8,562.9 1770.4,574.7 1771.0,572.7 1771.6,589.8 1772.2,578.0 1772.8,581.4 1773.4,572.7 1774.0,568.3 1774.6,566.2 1775.2,587.3 1775.8,568.8 1776.4,596.0 1777.0,575.7 1777.6,566.4 1778.2,576.5 1778.8,577.4 1779.4,567.9 1780.0,572.0 1780.6,586.7 1781.2,560.4 1781.8,577.2 1782.4,581.2 1783.0,567.5 1783.6,574.4 1784.2,574.9 1784.8,578.6 1785.4,577.1 1786.0,558.5 1786.6,575.6 1787.2,570.3 1787.8,570.0 1788.4,585.8 1789.0,573.7 1789.6,575.3 1790.2,571.1 1790.8,569.9 1791.4,570.6 1792.0,573.3 1792.6,577.2 1793.2,574.8 1793.8,558.3 1794.4,565.2 1795.0,565.5 1795.6,557.6 1796.2,568.1 1796.8,573.6 1797.4,581.3 1798.0,589.2 1798.6,572.7 1799.2,564.8 1799.8,563.3 1800.4,575.7 1801.0,576.2 1801.6,585.5 1802.2,565.0 1802.8,589.4 1803.4,569.9 1804.0,581.2 1804.6,595.4 1805.2,569.9 1805.8,568.5 1806.4,568.6 1807.0,585.6 1807.6,576.0 1808.2,568.7 1808.8,577.4 1809.4,569.9 1810.0,574.8 1810.6,562.1 1811.2,579.9 1811.8,564.5 1812.4,569.1 1813.0,575.4 1813.6,574.0 1814.2,578.4 1814.8,578.1 1815.4,579.7 1816.0,564.0 1816.6,576.7 1817.2,571.0 1817.8,564.0 1818.4,575.9 1819.0,576.8 1819.6,595.9 1820.2,576.4 1820.8,569.6 1821.4,560.4 1822.0,566.1 1822.6,556.9 1823.2,575.5 1823.8,559.0 1824.4,584.6 1825.0,589.0 1825.6,570.8 1826.2,566.8 1826.8,586.2 1827.4,565.6 1828.0,596.4 1828.6,572.8 1829.2,578.6 1829.8,572.2 1830.4,573.4 1831.0,580.5 1831.6,581.6 1832.2,574.7 1832.8,566.3 1833.4,573.4 1834.0,566.0 1834.6,596.8 1835.2,569.1 1835.8,563.8 1836.4,562.2 1837.0,594.4 1837.6,580.5 1838.2,578.4 1838.8,565.7 1839.4,574.3 1840.0,579.4 1840.6,577.6 1841.2,577.8 1841.8,594.2 1842.4,574.0 1843.0,582.3 1843.6,579.3 1844.2,569.5 1844.8,576.9 1845.4,572.9 1846.0,572.8 1846.6,572.6 1847.2,575.0 1847.8,594.2 1848.4,581.0 1849.0,567.3" fill="none" stroke="#f0f0f0" stroke-width="1.1" stroke-linejoin="round"/></g>
<path d="M1559.5,475.7 V615.7" stroke="#ffff30" stroke-width="1" stroke-dasharray="1,1.2"/>
<path d="M1559.8,480.6 V514.6" stroke="#f0f0f0" stroke-width="1.6"/>
<path d="M1626,508.8 V542.8" stroke="#f0f0f0" stroke-width="1.6"/>
<path d="M1607.9,533.9 V567.9" stroke="#f0f0f0" stroke-width="1.6"/>
<path d="M1641.9,523.4 V557.4" stroke="#f0f0f0" stroke-width="1.6"/>
<circle cx="1559.8" cy="480.6" r="5.9" fill="#f4ea10"/>
<circle cx="1626" cy="508.8" r="5.9" fill="#e81010"/>
<circle cx="1607.9" cy="533.9" r="5.9" fill="#7a35d8"/>
<circle cx="1641.9" cy="523.4" r="5.9" fill="#1ba1e2"/>
<rect x="1465" y="475.7" width="384.20000000000005" height="140.00000000000006" fill="none" stroke="#a4a4a4" stroke-width="1.6"/>
<text x="1454.80" y="483.0" font-size="20" fill="#fff" text-anchor="end">-10.0</text>
<text x="1454.80" y="511.0" font-size="20" fill="#fff" text-anchor="end">-20.0</text>
<text x="1454.80" y="539.0" font-size="20" fill="#fff" text-anchor="end">-30.0</text>
<text x="1454.80" y="567.0" font-size="20" fill="#fff" text-anchor="end">-40.0</text>
<text x="1454.80" y="595.0" font-size="20" fill="#fff" text-anchor="end">-50.0</text>
<text x="1454.80" y="623.0" font-size="20" fill="#fff" text-anchor="end">-60.0</text>
<text x="1482.22" y="633.6" font-size="14" fill="#fff" text-anchor="middle">-60</text>
<text x="1533.74" y="633.6" font-size="14" fill="#fff" text-anchor="middle">-20</text>
<text x="1585.26" y="633.6" font-size="14" fill="#fff" text-anchor="middle">20</text>
<text x="1636.78" y="633.6" font-size="14" fill="#fff" text-anchor="middle">60</text>
<text x="1688.30" y="633.6" font-size="14" fill="#fff" text-anchor="middle">100</text>
<text x="1739.82" y="633.6" font-size="14" fill="#fff" text-anchor="middle">140</text>
<text x="1791.34" y="633.6" font-size="14" fill="#fff" text-anchor="middle">180</text>
<text x="1842.86" y="633.6" font-size="14" fill="#fff" text-anchor="middle">220</text>
<text x="1507.98" y="653.2" font-size="14" fill="#fff" text-anchor="middle">-40</text>
<text x="1559.50" y="653.2" font-size="14" fill="#fff" text-anchor="middle">0</text>
<text x="1611.02" y="653.2" font-size="14" fill="#fff" text-anchor="middle">40</text>
<text x="1662.54" y="653.2" font-size="14" fill="#fff" text-anchor="middle">80</text>
<text x="1714.06" y="653.2" font-size="14" fill="#fff" text-anchor="middle">120</text>
<text x="1765.58" y="653.2" font-size="14" fill="#fff" text-anchor="middle">160</text>
<text x="1817.10" y="653.2" font-size="14" fill="#fff" text-anchor="middle">200</text>
<text x="1656.40" y="680.7" font-size="20" fill="#fff" text-anchor="middle">Distance Difference (km)</text>
<text transform="translate(1392.3,546) rotate(-90)" font-size="20" fill="#fff" text-anchor="middle">Magnitude (d...</text>
<rect x="1105" y="695" width="756" height="8" fill="#8a8a8a"/>
<rect x="1105" y="703" width="756" height="30" fill="#0e2d50"/>
<rect x="1105" y="733" width="756" height="207" fill="#000"/>
<text class="u" x="1446.38" y="723.8" font-size="23.3" fill="#fff" text-anchor="start" textLength="105.36" lengthAdjust="spacingAndGlyphs">TII Carriers</text>
<path d="M1840.5,709 L1859.5,709 L1850.0,726.5 Z" fill="none" stroke="#c4d0e4" stroke-width="1.3"/>
<rect x="1216.5" y="910.8" width="628.0" height="13.6" fill="#404040"/>
<path d="M1255.6,754.4 V924.4 M1316.8,754.4 V924.4 M1378.1,754.4 V924.4 M1439.3,754.4 V924.4 M1500.6,754.4 V924.4 M1561.8,754.4 V924.4 M1623.1,754.4 V924.4 M1684.3,754.4 V924.4 M1745.6,754.4 V924.4 M1806.8,754.4 V924.4 M1216.5,788.4 H1844.5 M1216.5,822.4 H1844.5 M1216.5,856.4 H1844.5 M1216.5,890.4 H1844.5" stroke="#8c8c8c" stroke-width="1" fill="none"/>
<path d="M1296.0,754.4 V924.4" stroke="#f2e81e" stroke-width="2.3" stroke-linecap="round" stroke-dasharray="0.01,3.2"/>
<path d="M1413.6,754.4 V924.4" stroke="#f2e81e" stroke-width="2.3" stroke-linecap="round" stroke-dasharray="0.01,3.2"/>
<path d="M1531.2,754.4 V924.4" stroke="#f2e81e" stroke-width="2.3" stroke-linecap="round" stroke-dasharray="0.01,3.2"/>
<path d="M1648.8,754.4 V924.4" stroke="#f2e81e" stroke-width="2.3" stroke-linecap="round" stroke-dasharray="0.01,3.2"/>
<path d="M1766.4,754.4 V924.4" stroke="#f2e81e" stroke-width="2.3" stroke-linecap="round" stroke-dasharray="0.01,3.2"/>
<path d="M1216.5,921.7 H1296.0 M1766.4,921.7 H1844.5" stroke="#b8b8b8" stroke-width="1.4"/>
<path d="M1296.0,924.4 v-0.1 M1297.7,924.4 v-1.5 M1299.4,924.4 v-8.3 M1301.1,924.4 v-0.3 M1302.8,924.4 v-0.4 M1304.5,924.4 v-3.9 M1306.2,924.4 v-1.7 M1307.9,924.4 v-0.3 M1309.6,924.4 v-1.0 M1311.3,924.4 v-1.1 M1313.0,924.4 v-1.9 M1314.7,924.4 v-0.8 M1316.4,924.4 v-2.4 M1318.1,924.4 v-0.5 M1319.8,924.4 v-1.4 M1321.5,924.4 v-1.3 M1323.2,924.4 v-0.4 M1324.9,924.4 v-1.2 M1326.6,924.4 v-0.5 M1328.3,924.4 v-0.4 M1330.0,924.4 v-1.6 M1331.7,924.4 v-0.7 M1333.4,924.4 v-0.8 M1335.1,924.4 v-0.7 M1336.8,924.4 v-1.5 M1338.5,924.4 v-1.0 M1340.2,924.4 v-1.8 M1341.9,924.4 v-0.1 M1343.6,924.4 v-2.5 M1345.3,924.4 v-0.6 M1347.0,924.4 v-0.5 M1348.7,924.4 v-2.2 M1350.4,924.4 v-2.2 M1352.1,924.4 v-0.9 M1353.8,924.4 v-0.4 M1355.5,924.4 v-1.2 M1357.2,924.4 v-0.3 M1358.9,924.4 v-2.4 M1360.6,924.4 v-1.8 M1362.3,924.4 v-0.5 M1364.0,924.4 v-1.4 M1365.7,924.4 v-0.2 M1367.4,924.4 v-5.6 M1369.1,924.4 v-0.8 M1370.8,924.4 v-0.5 M1372.5,924.4 v-0.4 M1374.2,924.4 v-1.2 M1375.9,924.4 v-2.8 M1377.6,924.4 v-1.4 M1379.3,924.4 v-0.4 M1381.0,924.4 v-1.6 M1382.7,924.4 v-0.6 M1384.4,924.4 v-1.7 M1386.1,924.4 v-0.8 M1387.8,924.4 v-1.4 M1389.5,924.4 v-5.7 M1391.2,924.4 v-0.2 M1392.9,924.4 v-0.1 M1394.6,924.4 v-1.6 M1396.3,924.4 v-0.6 M1398.0,924.4 v-1.1 M1399.7,924.4 v-4.9 M1401.4,924.4 v-1.4 M1403.1,924.4 v-2.8 M1404.8,924.4 v-0.9 M1406.5,924.4 v-0.6 M1408.2,924.4 v-1.1 M1409.9,924.4 v-1.2 M1411.6,924.4 v-0.0 M1413.3,924.4 v-0.3 M1415.0,924.4 v-0.3 M1416.7,924.4 v-0.8 M1418.4,924.4 v-0.5 M1420.1,924.4 v-1.2 M1421.8,924.4 v-0.5 M1423.5,924.4 v-1.0 M1425.2,924.4 v-0.4 M1426.9,924.4 v-0.6 M1428.6,924.4 v-1.0 M1430.3,924.4 v-0.9 M1432.0,924.4 v-0.8 M1433.7,924.4 v-0.1 M1435.4,924.4 v-0.4 M1437.1,924.4 v-0.9 M1438.8,924.4 v-0.4 M1440.5,924.4 v-1.0 M1442.2,924.4 v-0.3 M1443.9,924.4 v-0.9 M1445.6,924.4 v-1.1 M1447.3,924.4 v-0.6 M1449.0,924.4 v-2.9 M1450.7,924.4 v-0.1 M1452.4,924.4 v-2.7 M1454.1,924.4 v-1.2 M1455.8,924.4 v-0.1 M1457.5,924.4 v-2.3 M1459.2,924.4 v-0.3 M1460.9,924.4 v-1.1 M1462.6,924.4 v-0.8 M1464.3,924.4 v-0.5 M1466.0,924.4 v-1.5 M1467.7,924.4 v-1.1 M1469.4,924.4 v-8.7 M1471.1,924.4 v-0.9 M1472.8,924.4 v-0.5 M1474.5,924.4 v-1.7 M1476.2,924.4 v-1.5 M1477.9,924.4 v-0.6 M1479.6,924.4 v-0.9 M1481.3,924.4 v-1.0 M1483.0,924.4 v-0.5 M1484.7,924.4 v-1.4 M1486.4,924.4 v-0.7 M1488.1,924.4 v-2.6 M1489.8,924.4 v-1.7 M1491.5,924.4 v-0.1 M1493.2,924.4 v-0.1 M1494.9,924.4 v-0.9 M1496.6,924.4 v-5.4 M1498.3,924.4 v-0.4 M1500.0,924.4 v-0.3 M1501.7,924.4 v-0.3 M1503.4,924.4 v-1.2 M1505.1,924.4 v-0.7 M1506.8,924.4 v-1.0 M1508.5,924.4 v-1.4 M1510.2,924.4 v-0.4 M1511.9,924.4 v-1.0 M1513.6,924.4 v-0.2 M1515.3,924.4 v-1.1 M1517.0,924.4 v-1.1 M1518.7,924.4 v-1.2 M1520.4,924.4 v-0.5 M1522.1,924.4 v-1.6 M1523.8,924.4 v-1.9 M1525.5,924.4 v-0.0 M1527.2,924.4 v-0.9 M1528.9,924.4 v-0.2 M1530.6,924.4 v-1.1 M1532.3,924.4 v-0.5 M1534.0,924.4 v-1.1 M1535.7,924.4 v-0.5 M1537.4,924.4 v-0.1 M1539.1,924.4 v-1.3 M1540.8,924.4 v-1.3 M1542.5,924.4 v-2.1 M1544.2,924.4 v-0.2 M1545.9,924.4 v-1.5 M1547.6,924.4 v-0.7 M1549.3,924.4 v-0.0 M1551.0,924.4 v-0.5 M1552.7,924.4 v-0.3 M1554.4,924.4 v-2.3 M1556.1,924.4 v-0.3 M1557.8,924.4 v-1.1 M1559.5,924.4 v-2.0 M1561.2,924.4 v-0.1 M1562.9,924.4 v-0.3 M1564.6,924.4 v-0.1 M1566.3,924.4 v-0.6 M1568.0,924.4 v-1.0 M1569.7,924.4 v-0.4 M1571.4,924.4 v-0.0 M1573.1,924.4 v-0.8 M1574.8,924.4 v-0.0 M1576.5,924.4 v-1.2 M1578.2,924.4 v-0.7 M1579.9,924.4 v-1.0 M1581.6,924.4 v-1.2 M1583.3,924.4 v-0.2 M1585.0,924.4 v-0.7 M1586.7,924.4 v-1.9 M1588.4,924.4 v-1.7 M1590.1,924.4 v-0.2 M1591.8,924.4 v-1.6 M1593.5,924.4 v-1.1 M1595.2,924.4 v-1.8 M1596.9,924.4 v-0.7 M1598.6,924.4 v-0.5 M1600.3,924.4 v-1.5 M1602.0,924.4 v-1.1 M1603.7,924.4 v-2.8 M1605.4,924.4 v-2.0 M1607.1,924.4 v-1.2 M1608.8,924.4 v-0.1 M1610.5,924.4 v-0.3 M1612.2,924.4 v-0.5 M1613.9,924.4 v-1.0 M1615.6,924.4 v-2.3 M1617.3,924.4 v-2.9 M1619.0,924.4 v-2.2 M1620.7,924.4 v-0.5 M1622.4,924.4 v-1.9 M1624.1,924.4 v-0.2 M1625.8,924.4 v-0.3 M1627.5,924.4 v-3.0 M1629.2,924.4 v-0.2 M1630.9,924.4 v-1.9 M1632.6,924.4 v-0.5 M1634.3,924.4 v-0.7 M1636.0,924.4 v-0.7 M1637.7,924.4 v-1.7 M1639.4,924.4 v-0.1 M1641.1,924.4 v-2.4 M1642.8,924.4 v-0.1 M1644.5,924.4 v-0.5 M1646.2,924.4 v-0.3 M1647.9,924.4 v-1.1 M1649.6,924.4 v-1.1 M1651.3,924.4 v-0.0 M1653.0,924.4 v-0.4 M1654.7,924.4 v-1.5 M1656.4,924.4 v-0.6 M1658.1,924.4 v-0.2 M1659.8,924.4 v-1.9 M1661.5,924.4 v-1.6 M1663.2,924.4 v-1.1 M1664.9,924.4 v-0.4 M1666.6,924.4 v-0.5 M1668.3,924.4 v-1.7 M1670.0,924.4 v-0.2 M1671.7,924.4 v-2.0 M1673.4,924.4 v-0.6 M1675.1,924.4 v-0.1 M1676.8,924.4 v-0.4 M1678.5,924.4 v-1.8 M1680.2,924.4 v-1.0 M1681.9,924.4 v-1.3 M1683.6,924.4 v-0.3 M1685.3,924.4 v-0.5 M1687.0,924.4 v-0.9 M1688.7,924.4 v-1.7 M1690.4,924.4 v-0.8 M1692.1,924.4 v-1.1 M1693.8,924.4 v-1.7 M1695.5,924.4 v-0.8 M1697.2,924.4 v-0.1 M1698.9,924.4 v-1.1 M1700.6,924.4 v-0.2 M1702.3,924.4 v-0.3 M1704.0,924.4 v-0.1 M1705.7,924.4 v-1.1 M1707.4,924.4 v-2.0 M1709.1,924.4 v-0.5 M1710.8,924.4 v-0.7 M1712.5,924.4 v-0.6 M1714.2,924.4 v-0.4 M1715.9,924.4 v-1.9 M1717.6,924.4 v-1.7 M1719.3,924.4 v-1.0 M1721.0,924.4 v-0.6 M1722.7,924.4 v-0.4 M1724.4,924.4 v-1.5 M1726.1,924.4 v-0.3 M1727.8,924.4 v-0.1 M1729.5,924.4 v-0.3 M1731.2,924.4 v-1.1 M1732.9,924.4 v-0.4 M1734.6,924.4 v-2.2 M1736.3,924.4 v-2.5 M1738.0,924.4 v-0.9 M1739.7,924.4 v-1.1 M1741.4,924.4 v-2.1 M1743.1,924.4 v-0.0 M1744.8,924.4 v-1.3 M1746.5,924.4 v-0.2 M1748.2,924.4 v-1.4 M1749.9,924.4 v-0.3 M1751.6,924.4 v-2.8 M1753.3,924.4 v-1.2 M1755.0,924.4 v-0.4 M1756.7,924.4 v-1.6 M1758.4,924.4 v-0.1 M1760.1,924.4 v-0.5 M1761.8,924.4 v-1.1 M1763.5,924.4 v-2.2 M1765.2,924.4 v-1.0" stroke="#a8a8a8" stroke-width="1" fill="none"/>
<path d="M1345.4,924.4 V836.2 M1360.1,924.4 V835.1 M1389.5,924.4 V835.1 M1404.3,924.4 V840.5 M1462.7,924.4 V831.1 M1477.5,924.4 V828.4 M1506.9,924.4 V834.8 M1521.6,924.4 V825.1 M1580.9,924.4 V826.2 M1595.2,924.4 V828.1 M1624.7,924.4 V829.5 M1639.4,924.4 V819.5 M1698.3,924.4 V812.2 M1713.0,924.4 V814.9 M1742.4,924.4 V823.0 M1757.2,924.4 V830.8" stroke="#a9c8a2" stroke-width="1.4" fill="none"/>
<path d="M1346.6,924.4 V790.8 M1361.3,924.4 V789.1 M1390.7,924.4 V789.1 M1405.5,924.4 V797.3 M1463.9,924.4 V783.0 M1478.7,924.4 V778.9 M1508.1,924.4 V788.7 M1522.8,924.4 V774.0 M1582.1,924.4 V775.6 M1596.4,924.4 V778.5 M1625.9,924.4 V780.6 M1640.6,924.4 V765.4 M1699.5,924.4 V754.4 M1714.2,924.4 V758.5 M1743.6,924.4 V770.7 M1758.4,924.4 V782.6" stroke="#cfe6c8" stroke-width="1.5" fill="none"/>
<path d="M1400.6,924.4 V909.8 M1459.0,924.4 V899.1 M1488.5,924.4 V900.4 M1503.2,924.4 V900.4 M1517.9,924.4 V900.4 M1576.8,924.4 V903.2 M1606.2,924.4 V893.4 M1621.0,924.4 V899.1 M1635.7,924.4 V905.3 M1694.2,924.4 V899.1 M1723.6,924.4 V918.8 M1738.7,924.4 V920.8 M1753.5,924.4 V901.2" stroke="#f0e020" stroke-width="1.7" fill="none"/>
<rect x="1216.5" y="754.4" width="628.0" height="170.0" fill="none" stroke="#a4a4a4" stroke-width="1.6"/>
<text x="1205.50" y="761.0" font-size="20" fill="#fff" text-anchor="end">1.0</text>
<text x="1205.50" y="795.0" font-size="20" fill="#fff" text-anchor="end">0.8</text>
<text x="1205.50" y="829.0" font-size="20" fill="#fff" text-anchor="end">0.6</text>
<text x="1205.50" y="863.0" font-size="20" fill="#fff" text-anchor="end">0.4</text>
<text x="1205.50" y="897.0" font-size="20" fill="#fff" text-anchor="end">0.2</text>
<text x="1205.50" y="931.0" font-size="20" fill="#fff" text-anchor="end">0.0</text>
<text x="1255.58" y="946.3" font-size="20" fill="#fff" text-anchor="middle">900</text>
<text x="1316.83" y="946.3" font-size="20" fill="#fff" text-anchor="middle">700</text>
<text x="1378.08" y="946.3" font-size="20" fill="#fff" text-anchor="middle">500</text>
<text x="1439.33" y="946.3" font-size="20" fill="#fff" text-anchor="middle">300</text>
<text x="1500.58" y="946.3" font-size="20" fill="#fff" text-anchor="middle">100</text>
<text x="1561.83" y="946.3" font-size="20" fill="#fff" text-anchor="middle">100</text>
<text x="1623.08" y="946.3" font-size="20" fill="#fff" text-anchor="middle">300</text>
<text x="1684.33" y="946.3" font-size="20" fill="#fff" text-anchor="middle">500</text>
<text x="1745.58" y="946.3" font-size="20" fill="#fff" text-anchor="middle">700</text>
<text x="1806.83" y="946.3" font-size="20" fill="#fff" text-anchor="middle">900</text>
<text transform="translate(1154.5,839.5) rotate(-90)" font-size="19.5" fill="#fff" text-anchor="middle">Magnitude</text>
</svg>
</body></html>
